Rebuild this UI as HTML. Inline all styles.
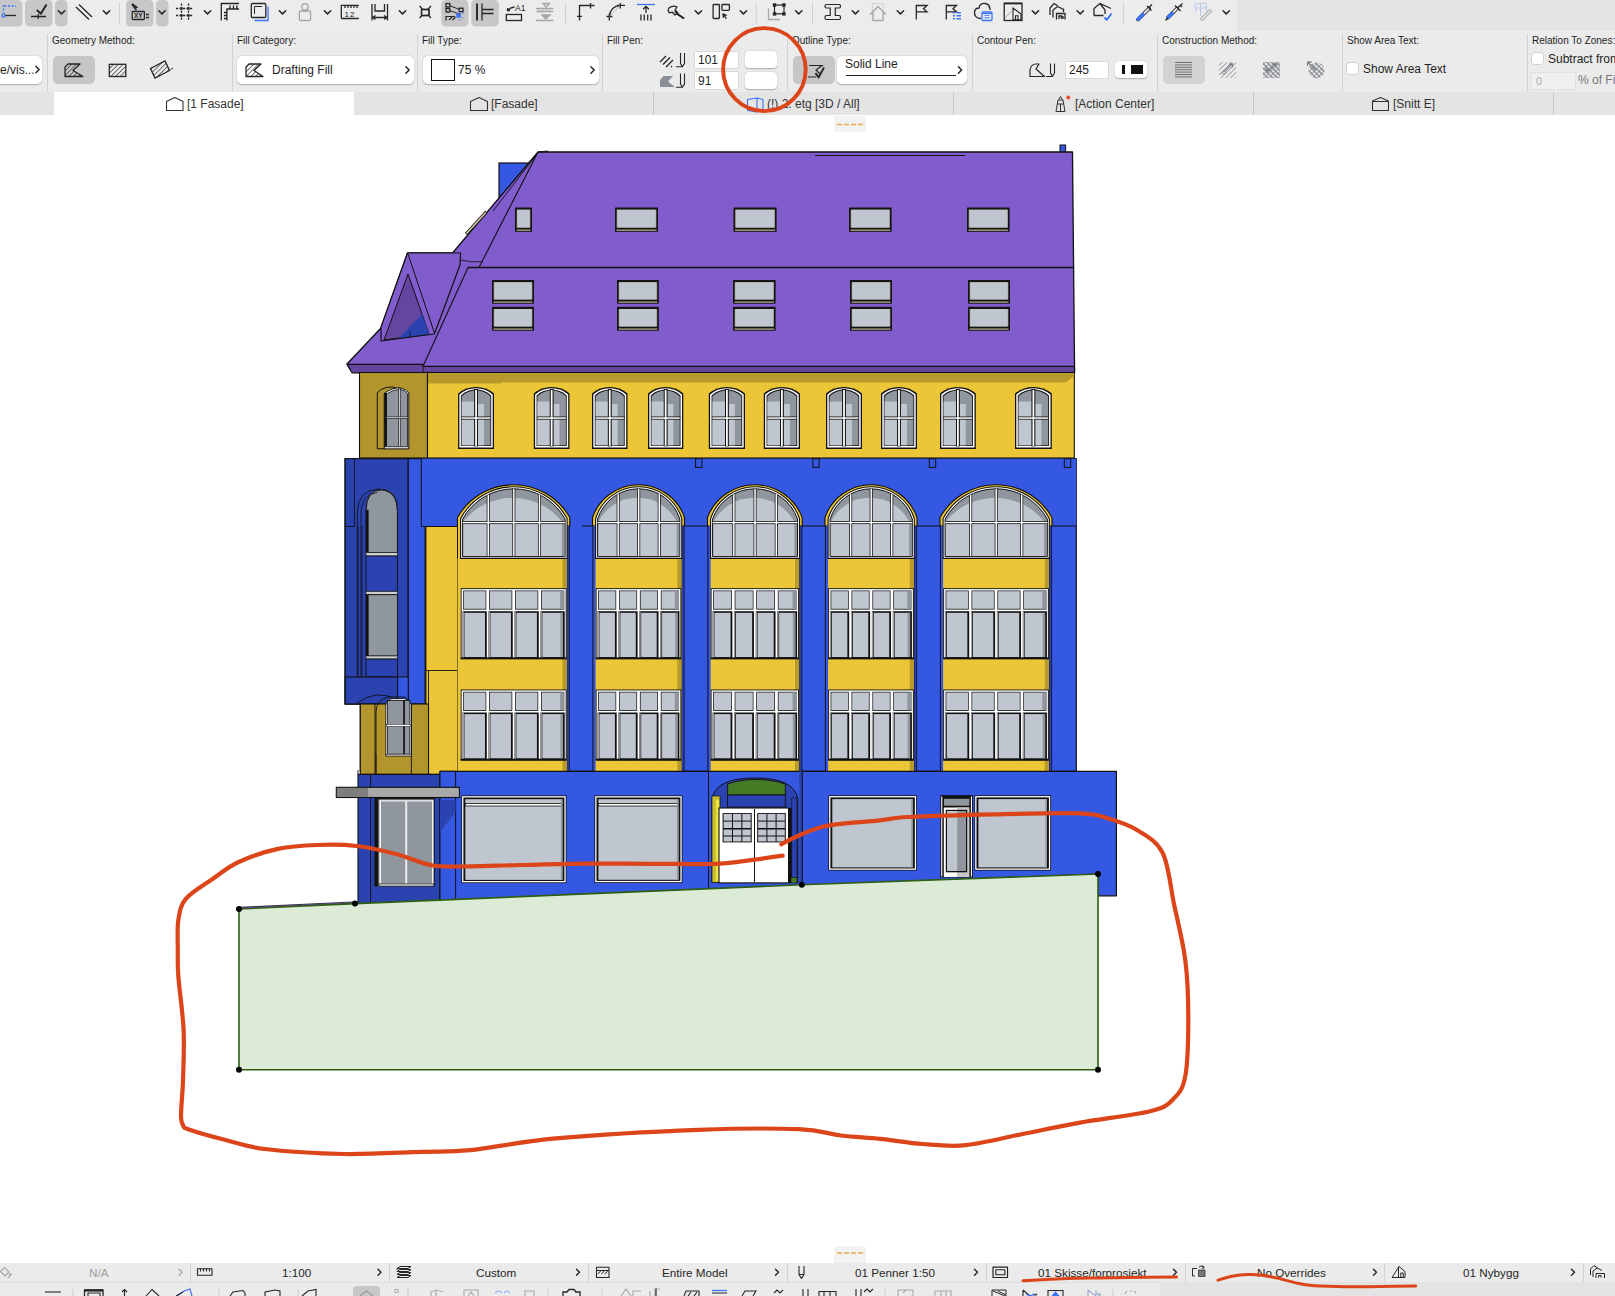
<!DOCTYPE html>
<html><head><meta charset="utf-8"><title>ArchiCAD</title>
<style>
html,body{margin:0;padding:0;background:#fff;}
body{width:1615px;height:1296px;overflow:hidden;font-family:"Liberation Sans",sans-serif;color:#222;}
#page{position:relative;width:1615px;height:1296px;overflow:hidden;background:#fff;}
#dw{position:absolute;left:0;top:0;}
#ov{position:absolute;left:0;top:0;pointer-events:none;}
.a{position:absolute;}
#tb{position:absolute;left:0;top:0;width:1615px;height:31px;background:#e4e4e4;}
#tbl{position:absolute;left:0;top:0;width:1237px;height:31px;background:#ececec;}
#ib{position:absolute;left:0;top:31px;width:1615px;height:61px;background:#ebebeb;}
#tabs{position:absolute;left:0;top:92px;width:1615px;height:23px;background:#e4e4e4;}
.sep{position:absolute;width:1px;background:#d2d2d2;}
.lbl{position:absolute;font-size:10px;color:#1e1e1e;white-space:nowrap;line-height:12px;}
.box{position:absolute;background:#fff;border-radius:5px;box-shadow:0 0.5px 1.5px rgba(0,0,0,0.28);}
.btn{position:absolute;background:#c6c6c8;border-radius:5px;}
.txt{position:absolute;font-size:12px;color:#1e1e1e;white-space:nowrap;line-height:14px;}
.inp{position:absolute;background:#fff;box-shadow:0 0 0 0.5px #c8c8c8;}
.tab{position:absolute;top:1px;height:23px;font-size:12px;color:#333;line-height:23px;white-space:nowrap;}
.tsep{position:absolute;top:0;width:1px;height:23px;background:#c4c4c4;}
#bb{position:absolute;left:0;top:1263px;width:1615px;height:19px;background:#ebebeb;}
#bt{position:absolute;left:0;top:1282px;width:1615px;height:14px;background:#e3e3e3;border-top:0 solid #d8d8d8;}
#btl{position:absolute;left:0;top:0;width:1160px;height:14px;background:#ebebeb;box-shadow:inset 0 1px 0 #dedede;}
.bsep{position:absolute;top:0;width:1px;height:19px;background:#d2d2d2;}
.btxt{position:absolute;font-size:11.7px;color:#262626;line-height:19px;top:0;white-space:nowrap;}
.chev{position:absolute;}
svg.i{position:absolute;overflow:visible;}

</style></head>
<body>
<div id="page">
<svg id="dw" width="1615" height="1296" viewBox="0 0 1615 1296">
<rect x="499" y="163" width="46" height="35" fill="#3558e2" stroke="#111" stroke-width="1.2" />
<rect x="1060" y="145" width="5.6" height="8" fill="#3558e2" stroke="#111" stroke-width="1" />
<polygon points="538,152 1072.5,152 1074.5,364 1074.5,372.5 359,372.5 350,369 347,364 381,328 407.5,253 452.5,253" fill="#805ccd" stroke="#111" stroke-width="1.3" stroke-linejoin="round" />
<polygon points="347,364.4 423,364.4 423.5,366.3 1074.5,366.3 1074.5,373 352,372.8" fill="#6446a0" stroke="#111" stroke-width="1.2" stroke-linejoin="round" />
<line x1="423.2" y1="364.4" x2="423.2" y2="373" stroke="#111" stroke-width="0.8"/>
<line x1="538" y1="152" x2="479" y2="267.5" stroke="#111" stroke-width="1.1"/>
<line x1="468" y1="267.5" x2="1074" y2="267.5" stroke="#111" stroke-width="1.3"/>
<line x1="468" y1="267.5" x2="423" y2="366.3" stroke="#111" stroke-width="1.1"/>
<line x1="815" y1="155.5" x2="965" y2="155.5" stroke="#111" stroke-width="1"/>
<line x1="548" y1="151" x2="538" y2="152" stroke="#111" stroke-width="1"/>
<polygon points="407.5,253 460.6,253 460,265 434.4,334 381,341 381,327" fill="#805ccd" stroke="#111" stroke-width="1.2" stroke-linejoin="round" />
<line x1="408" y1="253.8" x2="434.4" y2="333" stroke="#111" stroke-width="1"/>
<polygon points="408,274 429,334 384,340" fill="#6446a0" stroke="#111" stroke-width="1" stroke-linejoin="round" />
<polygon points="422,314 429,334 399,338" fill="#2b43b0" stroke="none" stroke-width="0" stroke-linejoin="round" />
<line x1="410" y1="331" x2="410" y2="337" stroke="#111" stroke-width="0.8"/>
<path d="M460.5,260 Q470,262.5 481.5,261.8" fill="none" stroke="#111" stroke-width="0.8"/>
<line x1="537" y1="154" x2="493" y2="211" stroke="#111" stroke-width="0.9"/>
<line x1="466" y1="234" x2="486.4" y2="211.8" stroke="#1a1a1a" stroke-width="3.2"/>
<line x1="466.5" y1="233.4" x2="485.8" y2="212.4" stroke="#d8ceb0" stroke-width="1.5"/>
<rect x="515" y="207.5" width="17" height="24.3" fill="#141410" stroke="none" stroke-width="1.0" />
<rect x="516.6" y="209.7" width="13.8" height="17.9" fill="#8a8470" stroke="none" stroke-width="1.0" />
<rect x="517.2" y="209.7" width="12.6" height="17.9" fill="#bfc6d0" stroke="none" stroke-width="1.0" />
<rect x="516.5" y="229.5" width="14.0" height="1.4" fill="#a89e84" stroke="none" stroke-width="1.0" />
<rect x="615" y="207.5" width="43" height="24.3" fill="#141410" stroke="none" stroke-width="1.0" />
<rect x="616.6" y="209.7" width="39.8" height="17.9" fill="#8a8470" stroke="none" stroke-width="1.0" />
<rect x="617.2" y="209.7" width="38.6" height="17.9" fill="#bfc6d0" stroke="none" stroke-width="1.0" />
<rect x="616.5" y="229.5" width="40.0" height="1.4" fill="#a89e84" stroke="none" stroke-width="1.0" />
<rect x="733.5" y="207.5" width="43.1" height="24.3" fill="#141410" stroke="none" stroke-width="1.0" />
<rect x="735.1" y="209.7" width="39.9" height="17.9" fill="#8a8470" stroke="none" stroke-width="1.0" />
<rect x="735.7" y="209.7" width="38.7" height="17.9" fill="#bfc6d0" stroke="none" stroke-width="1.0" />
<rect x="735.0" y="229.5" width="40.1" height="1.4" fill="#a89e84" stroke="none" stroke-width="1.0" />
<rect x="849" y="207.5" width="42.6" height="24.3" fill="#141410" stroke="none" stroke-width="1.0" />
<rect x="850.6" y="209.7" width="39.4" height="17.9" fill="#8a8470" stroke="none" stroke-width="1.0" />
<rect x="851.2" y="209.7" width="38.2" height="17.9" fill="#bfc6d0" stroke="none" stroke-width="1.0" />
<rect x="850.5" y="229.5" width="39.6" height="1.4" fill="#a89e84" stroke="none" stroke-width="1.0" />
<rect x="967" y="207.5" width="42.6" height="24.3" fill="#141410" stroke="none" stroke-width="1.0" />
<rect x="968.6" y="209.7" width="39.4" height="17.9" fill="#8a8470" stroke="none" stroke-width="1.0" />
<rect x="969.2" y="209.7" width="38.2" height="17.9" fill="#bfc6d0" stroke="none" stroke-width="1.0" />
<rect x="968.5" y="229.5" width="39.6" height="1.4" fill="#a89e84" stroke="none" stroke-width="1.0" />
<rect x="492" y="280" width="42" height="23.7" fill="#141410" stroke="none" stroke-width="1.0" />
<rect x="493.6" y="282.2" width="38.8" height="17.3" fill="#8a8470" stroke="none" stroke-width="1.0" />
<rect x="494.2" y="282.2" width="37.6" height="17.3" fill="#bfc6d0" stroke="none" stroke-width="1.0" />
<rect x="493.5" y="301.4" width="39.0" height="1.4" fill="#a89e84" stroke="none" stroke-width="1.0" />
<rect x="492" y="306.8" width="42" height="23.9" fill="#141410" stroke="none" stroke-width="1.0" />
<rect x="493.6" y="309.0" width="38.8" height="17.5" fill="#8a8470" stroke="none" stroke-width="1.0" />
<rect x="494.2" y="309.0" width="37.6" height="17.5" fill="#bfc6d0" stroke="none" stroke-width="1.0" />
<rect x="493.5" y="328.4" width="39.0" height="1.4" fill="#a89e84" stroke="none" stroke-width="1.0" />
<rect x="617" y="280" width="41.8" height="23.7" fill="#141410" stroke="none" stroke-width="1.0" />
<rect x="618.6" y="282.2" width="38.6" height="17.3" fill="#8a8470" stroke="none" stroke-width="1.0" />
<rect x="619.2" y="282.2" width="37.4" height="17.3" fill="#bfc6d0" stroke="none" stroke-width="1.0" />
<rect x="618.5" y="301.4" width="38.8" height="1.4" fill="#a89e84" stroke="none" stroke-width="1.0" />
<rect x="617" y="306.8" width="41.8" height="23.9" fill="#141410" stroke="none" stroke-width="1.0" />
<rect x="618.6" y="309.0" width="38.6" height="17.5" fill="#8a8470" stroke="none" stroke-width="1.0" />
<rect x="619.2" y="309.0" width="37.4" height="17.5" fill="#bfc6d0" stroke="none" stroke-width="1.0" />
<rect x="618.5" y="328.4" width="38.8" height="1.4" fill="#a89e84" stroke="none" stroke-width="1.0" />
<rect x="733" y="280" width="42.6" height="23.7" fill="#141410" stroke="none" stroke-width="1.0" />
<rect x="734.6" y="282.2" width="39.4" height="17.3" fill="#8a8470" stroke="none" stroke-width="1.0" />
<rect x="735.2" y="282.2" width="38.2" height="17.3" fill="#bfc6d0" stroke="none" stroke-width="1.0" />
<rect x="734.5" y="301.4" width="39.6" height="1.4" fill="#a89e84" stroke="none" stroke-width="1.0" />
<rect x="733" y="306.8" width="42.6" height="23.9" fill="#141410" stroke="none" stroke-width="1.0" />
<rect x="734.6" y="309.0" width="39.4" height="17.5" fill="#8a8470" stroke="none" stroke-width="1.0" />
<rect x="735.2" y="309.0" width="38.2" height="17.5" fill="#bfc6d0" stroke="none" stroke-width="1.0" />
<rect x="734.5" y="328.4" width="39.6" height="1.4" fill="#a89e84" stroke="none" stroke-width="1.0" />
<rect x="850" y="280" width="42" height="23.7" fill="#141410" stroke="none" stroke-width="1.0" />
<rect x="851.6" y="282.2" width="38.8" height="17.3" fill="#8a8470" stroke="none" stroke-width="1.0" />
<rect x="852.2" y="282.2" width="37.6" height="17.3" fill="#bfc6d0" stroke="none" stroke-width="1.0" />
<rect x="851.5" y="301.4" width="39.0" height="1.4" fill="#a89e84" stroke="none" stroke-width="1.0" />
<rect x="850" y="306.8" width="42" height="23.9" fill="#141410" stroke="none" stroke-width="1.0" />
<rect x="851.6" y="309.0" width="38.8" height="17.5" fill="#8a8470" stroke="none" stroke-width="1.0" />
<rect x="852.2" y="309.0" width="37.6" height="17.5" fill="#bfc6d0" stroke="none" stroke-width="1.0" />
<rect x="851.5" y="328.4" width="39.0" height="1.4" fill="#a89e84" stroke="none" stroke-width="1.0" />
<rect x="968" y="280" width="42" height="23.7" fill="#141410" stroke="none" stroke-width="1.0" />
<rect x="969.6" y="282.2" width="38.8" height="17.3" fill="#8a8470" stroke="none" stroke-width="1.0" />
<rect x="970.2" y="282.2" width="37.6" height="17.3" fill="#bfc6d0" stroke="none" stroke-width="1.0" />
<rect x="969.5" y="301.4" width="39.0" height="1.4" fill="#a89e84" stroke="none" stroke-width="1.0" />
<rect x="968" y="306.8" width="42" height="23.9" fill="#141410" stroke="none" stroke-width="1.0" />
<rect x="969.6" y="309.0" width="38.8" height="17.5" fill="#8a8470" stroke="none" stroke-width="1.0" />
<rect x="970.2" y="309.0" width="37.6" height="17.5" fill="#bfc6d0" stroke="none" stroke-width="1.0" />
<rect x="969.5" y="328.4" width="39.0" height="1.4" fill="#a89e84" stroke="none" stroke-width="1.0" />
<rect x="359.5" y="372.5" width="68.0" height="85.5" fill="#b3952d" stroke="#111" stroke-width="1.1" />
<rect x="427.5" y="372.5" width="646.8" height="85.5" fill="#ecc636" stroke="#111" stroke-width="1.1" />
<polygon points="428,373 1074,373 1074,376 1066,382.6 501,382.6 501,383.5 428,383.5" fill="#b89a2c" stroke="none" stroke-width="0" stroke-linejoin="round" />
<path d="M384.2,448.8 H377.3 V393 Q379,389.5 386,387.5 L393,387 L408.8,392.5" fill="none" stroke="#111" stroke-width="1"/>
<path d="M384.2,448.8 V393.5 Q392,387.5 400,387.8 Q406,389 408.8,392.8 V448.8 Z" fill="#fff" stroke="#111" stroke-width="1"/>
<path d="M386.5,447.5 V394 Q393,389.2 400,389.4 Q405.5,390.3 407.5,393.5 V447.5 Z" fill="#8f969e" stroke="#111" stroke-width="0.8"/>
<rect x="384.2" y="393" width="2.6" height="55" fill="#111" stroke="none" stroke-width="1.0" />
<rect x="398.3" y="388" width="2.2" height="60" fill="#111" stroke="none" stroke-width="1.0" />
<rect x="398.9" y="388.5" width="1.0" height="59.0" fill="#ddd" stroke="none" stroke-width="1.0" />
<rect x="386.5" y="416.6" width="21.0" height="2.2" fill="#111" stroke="none" stroke-width="1.0" />
<rect x="386.5" y="417.2" width="21.0" height="1.0" fill="#ddd" stroke="none" stroke-width="1.0" />
<rect x="384.5" y="446.5" width="24.3" height="2.3" fill="#ccc" stroke="#111" stroke-width="0.6" />
<path d="M458.1,448.9 V393.4 A28.372070312499964,28.372070312499964 0 0 1 494,393.4 V448.9 Z" fill="#111"/>
<path d="M459.40000000000003,447.59999999999997 V394.4 A25.77315573770485,25.77315573770485 0 0 1 492.7,394.4 V447.59999999999997 Z" fill="#fff"/>
<path d="M460.90000000000003,446.09999999999997 V395.4 A22.68642241379304,22.68642241379304 0 0 1 491.2,395.4 V446.09999999999997 Z" fill="#111"/>
<path d="M461.70000000000005,445.29999999999995 V396.2 A21.185937499999913,21.185937499999913 0 0 1 490.4,396.2 V445.29999999999995 Z" fill="#8f969e"/>
<rect x="461.70000000000005" y="401.5" width="12.55" height="43.8" fill="#bfc6d0" stroke="none" stroke-width="1.0" />
<rect x="477.85" y="404" width="6.1" height="41.3" fill="#bfc6d0" stroke="none" stroke-width="1.0" />
<rect x="474.15000000000003" y="389" width="3.8" height="57.4" fill="#111" stroke="none" stroke-width="1.0" />
<rect x="475.15000000000003" y="390" width="1.8" height="55.9" fill="#fff" stroke="none" stroke-width="1.0" />
<rect x="461.20000000000005" y="416.5" width="29.7" height="3.1" fill="#111" stroke="none" stroke-width="1.0" />
<rect x="461.70000000000005" y="417.3" width="28.7" height="1.5" fill="#fff" stroke="none" stroke-width="1.0" />
<rect x="475.15000000000003" y="416.5" width="1.8" height="3.1" fill="#fff" stroke="none" stroke-width="1.0" />
<path d="M533.8,448.9 V393.4 A28.09238281250006,28.09238281250006 0 0 1 569.5,393.4 V448.9 Z" fill="#111"/>
<path d="M535.0999999999999,447.59999999999997 V394.4 A25.501024590164114,25.501024590164114 0 0 1 568.2,394.4 V447.59999999999997 Z" fill="#fff"/>
<path d="M536.5999999999999,446.09999999999997 V395.4 A22.426077586207068,22.426077586207068 0 0 1 566.7,395.4 V446.09999999999997 Z" fill="#111"/>
<path d="M537.4,445.29999999999995 V396.2 A20.930580357142855,20.930580357142855 0 0 1 565.9,396.2 V445.29999999999995 Z" fill="#8f969e"/>
<rect x="537.4" y="401.5" width="12.45" height="43.8" fill="#bfc6d0" stroke="none" stroke-width="1.0" />
<rect x="553.4499999999999" y="404" width="6.05" height="41.3" fill="#bfc6d0" stroke="none" stroke-width="1.0" />
<rect x="549.75" y="389" width="3.8" height="57.4" fill="#111" stroke="none" stroke-width="1.0" />
<rect x="550.75" y="390" width="1.8" height="55.9" fill="#fff" stroke="none" stroke-width="1.0" />
<rect x="536.9" y="416.5" width="29.5" height="3.1" fill="#111" stroke="none" stroke-width="1.0" />
<rect x="537.4" y="417.3" width="28.5" height="1.5" fill="#fff" stroke="none" stroke-width="1.0" />
<rect x="550.75" y="416.5" width="1.8" height="3.1" fill="#fff" stroke="none" stroke-width="1.0" />
<path d="M592,448.9 V393.4 A27.814257812500003,27.814257812500003 0 0 1 627.5,393.4 V448.9 Z" fill="#111"/>
<path d="M593.3,447.59999999999997 V394.4 A25.230532786885366,25.230532786885366 0 0 1 626.2,394.4 V447.59999999999997 Z" fill="#fff"/>
<path d="M594.8,446.09999999999997 V395.4 A22.167456896551837,22.167456896551837 0 0 1 624.7,395.4 V446.09999999999997 Z" fill="#111"/>
<path d="M595.6,445.29999999999995 V396.2 A20.677008928571368,20.677008928571368 0 0 1 623.9,396.2 V445.29999999999995 Z" fill="#8f969e"/>
<rect x="595.6" y="401.5" width="12.35" height="43.8" fill="#bfc6d0" stroke="none" stroke-width="1.0" />
<rect x="611.55" y="404" width="6.01" height="41.3" fill="#bfc6d0" stroke="none" stroke-width="1.0" />
<rect x="607.85" y="389" width="3.8" height="57.4" fill="#111" stroke="none" stroke-width="1.0" />
<rect x="608.85" y="390" width="1.8" height="55.9" fill="#fff" stroke="none" stroke-width="1.0" />
<rect x="595.1" y="416.5" width="29.3" height="3.1" fill="#111" stroke="none" stroke-width="1.0" />
<rect x="595.6" y="417.3" width="28.3" height="1.5" fill="#fff" stroke="none" stroke-width="1.0" />
<rect x="608.85" y="416.5" width="1.8" height="3.1" fill="#fff" stroke="none" stroke-width="1.0" />
<path d="M648,448.9 V393.4 A27.537695312499935,27.537695312499935 0 0 1 683.3,393.4 V448.9 Z" fill="#111"/>
<path d="M649.3,447.59999999999997 V394.4 A24.96168032786891,24.96168032786891 0 0 1 682.0,394.4 V447.59999999999997 Z" fill="#fff"/>
<path d="M650.8,446.09999999999997 V395.4 A21.91056034482764,21.91056034482764 0 0 1 680.5,395.4 V446.09999999999997 Z" fill="#111"/>
<path d="M651.6,445.29999999999995 V396.2 A20.425223214285598,20.425223214285598 0 0 1 679.6999999999999,396.2 V445.29999999999995 Z" fill="#8f969e"/>
<rect x="651.6" y="401.5" width="12.25" height="43.8" fill="#bfc6d0" stroke="none" stroke-width="1.0" />
<rect x="667.4499999999999" y="404" width="5.97" height="41.3" fill="#bfc6d0" stroke="none" stroke-width="1.0" />
<rect x="663.75" y="389" width="3.8" height="57.4" fill="#111" stroke="none" stroke-width="1.0" />
<rect x="664.75" y="390" width="1.8" height="55.9" fill="#fff" stroke="none" stroke-width="1.0" />
<rect x="651.1" y="416.5" width="29.1" height="3.1" fill="#111" stroke="none" stroke-width="1.0" />
<rect x="651.6" y="417.3" width="28.1" height="1.5" fill="#fff" stroke="none" stroke-width="1.0" />
<rect x="664.75" y="416.5" width="1.8" height="3.1" fill="#fff" stroke="none" stroke-width="1.0" />
<path d="M708.8,448.9 V393.4 A28.794531250000066,28.794531250000066 0 0 1 745,393.4 V448.9 Z" fill="#111"/>
<path d="M710.0999999999999,447.59999999999997 V394.4 A26.184426229508386,26.184426229508386 0 0 1 743.7,394.4 V447.59999999999997 Z" fill="#fff"/>
<path d="M711.5999999999999,446.09999999999997 V395.4 A23.080172413793278,23.080172413793278 0 0 1 742.2,395.4 V446.09999999999997 Z" fill="#111"/>
<path d="M712.4,445.29999999999995 V396.2 A21.572321428571428,21.572321428571428 0 0 1 741.4,396.2 V445.29999999999995 Z" fill="#8f969e"/>
<rect x="712.4" y="401.5" width="12.7" height="43.8" fill="#bfc6d0" stroke="none" stroke-width="1.0" />
<rect x="728.6999999999999" y="404" width="6.16" height="41.3" fill="#bfc6d0" stroke="none" stroke-width="1.0" />
<rect x="725.0" y="389" width="3.8" height="57.4" fill="#111" stroke="none" stroke-width="1.0" />
<rect x="726.0" y="390" width="1.8" height="55.9" fill="#fff" stroke="none" stroke-width="1.0" />
<rect x="711.9" y="416.5" width="30.0" height="3.1" fill="#111" stroke="none" stroke-width="1.0" />
<rect x="712.4" y="417.3" width="29.0" height="1.5" fill="#fff" stroke="none" stroke-width="1.0" />
<rect x="726.0" y="416.5" width="1.8" height="3.1" fill="#fff" stroke="none" stroke-width="1.0" />
<path d="M763.8,448.9 V393.4 A28.794531250000066,28.794531250000066 0 0 1 800,393.4 V448.9 Z" fill="#111"/>
<path d="M765.0999999999999,447.59999999999997 V394.4 A26.184426229508386,26.184426229508386 0 0 1 798.7,394.4 V447.59999999999997 Z" fill="#fff"/>
<path d="M766.5999999999999,446.09999999999997 V395.4 A23.080172413793278,23.080172413793278 0 0 1 797.2,395.4 V446.09999999999997 Z" fill="#111"/>
<path d="M767.4,445.29999999999995 V396.2 A21.572321428571428,21.572321428571428 0 0 1 796.4,396.2 V445.29999999999995 Z" fill="#8f969e"/>
<rect x="767.4" y="401.5" width="12.7" height="43.8" fill="#bfc6d0" stroke="none" stroke-width="1.0" />
<rect x="783.6999999999999" y="404" width="6.16" height="41.3" fill="#bfc6d0" stroke="none" stroke-width="1.0" />
<rect x="780.0" y="389" width="3.8" height="57.4" fill="#111" stroke="none" stroke-width="1.0" />
<rect x="781.0" y="390" width="1.8" height="55.9" fill="#fff" stroke="none" stroke-width="1.0" />
<rect x="766.9" y="416.5" width="30.0" height="3.1" fill="#111" stroke="none" stroke-width="1.0" />
<rect x="767.4" y="417.3" width="29.0" height="1.5" fill="#fff" stroke="none" stroke-width="1.0" />
<rect x="781.0" y="416.5" width="1.8" height="3.1" fill="#fff" stroke="none" stroke-width="1.0" />
<path d="M826,448.9 V393.4 A28.512500000000003,28.512500000000003 0 0 1 862,393.4 V448.9 Z" fill="#111"/>
<path d="M827.3,447.59999999999997 V394.4 A25.90983606557389,25.90983606557389 0 0 1 860.7,394.4 V447.59999999999997 Z" fill="#fff"/>
<path d="M828.8,446.09999999999997 V395.4 A22.81724137931046,22.81724137931046 0 0 1 859.2,395.4 V446.09999999999997 Z" fill="#111"/>
<path d="M829.6,445.29999999999995 V396.2 A21.314285714285653,21.314285714285653 0 0 1 858.4,396.2 V445.29999999999995 Z" fill="#8f969e"/>
<rect x="829.6" y="401.5" width="12.6" height="43.8" fill="#bfc6d0" stroke="none" stroke-width="1.0" />
<rect x="845.8" y="404" width="6.12" height="41.3" fill="#bfc6d0" stroke="none" stroke-width="1.0" />
<rect x="842.1" y="389" width="3.8" height="57.4" fill="#111" stroke="none" stroke-width="1.0" />
<rect x="843.1" y="390" width="1.8" height="55.9" fill="#fff" stroke="none" stroke-width="1.0" />
<rect x="829.1" y="416.5" width="29.8" height="3.1" fill="#111" stroke="none" stroke-width="1.0" />
<rect x="829.6" y="417.3" width="28.8" height="1.5" fill="#fff" stroke="none" stroke-width="1.0" />
<rect x="843.1" y="416.5" width="1.8" height="3.1" fill="#fff" stroke="none" stroke-width="1.0" />
<path d="M881,448.9 V393.4 A28.512500000000003,28.512500000000003 0 0 1 917,393.4 V448.9 Z" fill="#111"/>
<path d="M882.3,447.59999999999997 V394.4 A25.90983606557389,25.90983606557389 0 0 1 915.7,394.4 V447.59999999999997 Z" fill="#fff"/>
<path d="M883.8,446.09999999999997 V395.4 A22.81724137931046,22.81724137931046 0 0 1 914.2,395.4 V446.09999999999997 Z" fill="#111"/>
<path d="M884.6,445.29999999999995 V396.2 A21.314285714285653,21.314285714285653 0 0 1 913.4,396.2 V445.29999999999995 Z" fill="#8f969e"/>
<rect x="884.6" y="401.5" width="12.6" height="43.8" fill="#bfc6d0" stroke="none" stroke-width="1.0" />
<rect x="900.8" y="404" width="6.12" height="41.3" fill="#bfc6d0" stroke="none" stroke-width="1.0" />
<rect x="897.1" y="389" width="3.8" height="57.4" fill="#111" stroke="none" stroke-width="1.0" />
<rect x="898.1" y="390" width="1.8" height="55.9" fill="#fff" stroke="none" stroke-width="1.0" />
<rect x="884.1" y="416.5" width="29.8" height="3.1" fill="#111" stroke="none" stroke-width="1.0" />
<rect x="884.6" y="417.3" width="28.8" height="1.5" fill="#fff" stroke="none" stroke-width="1.0" />
<rect x="898.1" y="416.5" width="1.8" height="3.1" fill="#fff" stroke="none" stroke-width="1.0" />
<path d="M940,448.9 V393.4 A28.232031249999938,28.232031249999938 0 0 1 975.8,393.4 V448.9 Z" fill="#111"/>
<path d="M941.3,447.59999999999997 V394.4 A25.636885245901702,25.636885245901702 0 0 1 974.5,394.4 V447.59999999999997 Z" fill="#fff"/>
<path d="M942.8,446.09999999999997 V395.4 A22.556034482758676,22.556034482758676 0 0 1 973.0,395.4 V446.09999999999997 Z" fill="#111"/>
<path d="M943.6,445.29999999999995 V396.2 A21.058035714285598,21.058035714285598 0 0 1 972.1999999999999,396.2 V445.29999999999995 Z" fill="#8f969e"/>
<rect x="943.6" y="401.5" width="12.5" height="43.8" fill="#bfc6d0" stroke="none" stroke-width="1.0" />
<rect x="959.6999999999999" y="404" width="6.08" height="41.3" fill="#bfc6d0" stroke="none" stroke-width="1.0" />
<rect x="956.0" y="389" width="3.8" height="57.4" fill="#111" stroke="none" stroke-width="1.0" />
<rect x="957.0" y="390" width="1.8" height="55.9" fill="#fff" stroke="none" stroke-width="1.0" />
<rect x="943.1" y="416.5" width="29.6" height="3.1" fill="#111" stroke="none" stroke-width="1.0" />
<rect x="943.6" y="417.3" width="28.6" height="1.5" fill="#fff" stroke="none" stroke-width="1.0" />
<rect x="957.0" y="416.5" width="1.8" height="3.1" fill="#fff" stroke="none" stroke-width="1.0" />
<path d="M1015,448.9 V393.4 A29.649999999999935,29.649999999999935 0 0 1 1051.8,393.4 V448.9 Z" fill="#111"/>
<path d="M1016.3,447.59999999999997 V394.4 A27.01803278688531,27.01803278688531 0 0 1 1050.5,394.4 V447.59999999999997 Z" fill="#fff"/>
<path d="M1017.8,446.09999999999997 V395.4 A23.87931034482764,23.87931034482764 0 0 1 1049.0,395.4 V446.09999999999997 Z" fill="#111"/>
<path d="M1018.6,445.29999999999995 V396.2 A22.357142857142886,22.357142857142886 0 0 1 1048.2,396.2 V445.29999999999995 Z" fill="#8f969e"/>
<rect x="1018.6" y="401.5" width="13.0" height="43.8" fill="#bfc6d0" stroke="none" stroke-width="1.0" />
<rect x="1035.2" y="404" width="6.3" height="41.3" fill="#bfc6d0" stroke="none" stroke-width="1.0" />
<rect x="1031.5" y="389" width="3.8" height="57.4" fill="#111" stroke="none" stroke-width="1.0" />
<rect x="1032.5" y="390" width="1.8" height="55.9" fill="#fff" stroke="none" stroke-width="1.0" />
<rect x="1018.1" y="416.5" width="30.6" height="3.1" fill="#111" stroke="none" stroke-width="1.0" />
<rect x="1018.6" y="417.3" width="29.6" height="1.5" fill="#fff" stroke="none" stroke-width="1.0" />
<rect x="1032.5" y="416.5" width="1.8" height="3.1" fill="#fff" stroke="none" stroke-width="1.0" />
<polygon points="345,458.5 1076.3,458.5 1076.3,771.3 360.3,771.3 360.3,704 345,704" fill="#3558e2" stroke="#111" stroke-width="1.2" stroke-linejoin="round" />
<rect x="345.2" y="458.7" width="63.0" height="245.3" fill="#2b43b0" stroke="#111" stroke-width="1.1" />
<rect x="408.2" y="458.7" width="17.0" height="245.3" fill="#3558e2" stroke="#111" stroke-width="1.1" />
<line x1="354.4" y1="458.7" x2="354.4" y2="526.5" stroke="#111" stroke-width="0.9"/>
<line x1="345.2" y1="526.5" x2="354.4" y2="526.5" stroke="#111" stroke-width="0.9"/>
<line x1="358" y1="526" x2="358" y2="677" stroke="#111" stroke-width="0.8"/>
<line x1="362" y1="526" x2="362" y2="677" stroke="#111" stroke-width="0.8"/>
<path d="M366,552.7 V511.4 Q366,489.8 381.7,489.8 Q397.4,489.8 397.4,511.4 V552.7 Z" fill="#8f969e" stroke="#111" stroke-width="1"/>
<rect x="366" y="509.8" width="2.6" height="42.9" fill="#111" stroke="none" stroke-width="1.0" />
<rect x="366" y="552.7" width="31.4" height="3.3" fill="#d0d0d0" stroke="#111" stroke-width="0.6" />
<rect x="366" y="556" width="31.4" height="35.4" fill="#2b43b0" stroke="#111" stroke-width="0.9" />
<rect x="366" y="591.4" width="31.4" height="3.3" fill="#d0d0d0" stroke="#111" stroke-width="0.6" />
<rect x="366" y="594.7" width="31.4" height="61.3" fill="#8f969e" stroke="#111" stroke-width="0.9" />
<rect x="366" y="594.7" width="2.6" height="61.3" fill="#111" stroke="none" stroke-width="1.0" />
<rect x="366" y="656" width="31.4" height="3" fill="#d0d0d0" stroke="#111" stroke-width="0.6" />
<rect x="366" y="659" width="31.4" height="18" fill="#2b43b0" stroke="#111" stroke-width="0.9" />
<rect x="345.2" y="677" width="52.5" height="27" fill="#2b43b0" stroke="#111" stroke-width="1.1" />
<rect x="397.7" y="677" width="10.5" height="27" fill="#3558e2" stroke="#111" stroke-width="1" />
<path d="M356,704 Q376,688 397.7,700" fill="none" stroke="#111" stroke-width="0.9"/>
<rect x="421.3" y="458.7" width="655.0" height="67.8" fill="#3558e2" stroke="none" stroke-width="1.0" />
<rect x="695.5999999999999" y="458.7" width="6.4" height="8.7" fill="#3558e2" stroke="#111" stroke-width="1" />
<rect x="812.8" y="458.7" width="6.4" height="8.7" fill="#3558e2" stroke="#111" stroke-width="1" />
<rect x="929.3" y="458.7" width="6.4" height="8.7" fill="#3558e2" stroke="#111" stroke-width="1" />
<rect x="1064.3" y="458.7" width="6.4" height="8.7" fill="#3558e2" stroke="#111" stroke-width="1" />
<line x1="421.3" y1="526.5" x2="457" y2="526.5" stroke="#111" stroke-width="1"/>
<line x1="421.3" y1="458.7" x2="421.3" y2="526.5" stroke="#111" stroke-width="1"/>
<line x1="425.4" y1="526.5" x2="425.4" y2="704" stroke="#111" stroke-width="1"/>
<path d="M357.3,677 V512 Q358,491 377,489 Q394,489 397.4,505" fill="none" stroke="#111" stroke-width="0.9"/>
<path d="M361,677 V512 Q362,494 377,492.5" fill="none" stroke="#111" stroke-width="0.8"/>
<rect x="425.9" y="526.5" width="31.6" height="247.9" fill="#ecc636" stroke="#111" stroke-width="1" />
<line x1="425.9" y1="670.5" x2="457.3" y2="670.5" stroke="#111" stroke-width="0.9"/>
<line x1="428.5" y1="670.5" x2="428.5" y2="774.4" stroke="#111" stroke-width="0.9"/>
<rect x="360.3" y="704" width="68.2" height="70.4" fill="#b3952d" stroke="#111" stroke-width="1.1" />
<line x1="375" y1="704" x2="375" y2="774" stroke="#111" stroke-width="0.9"/>
<line x1="376" y1="754" x2="376" y2="774" stroke="#111" stroke-width="0.7"/>
<path d="M376,774 V712 Q376,700 388,697 L405,697 L411.4,704" fill="none" stroke="#111" stroke-width="0.9"/>
<path d="M385.8,755.8 V706 Q385.8,699.5 392,698.7 L405,698.7 L411.4,704 V755.8 Z" fill="#fff" stroke="#111" stroke-width="0.9"/>
<rect x="387.5" y="700.5" width="22.3" height="53.7" fill="#8f969e" stroke="#111" stroke-width="0.8" />
<rect x="403.2" y="700" width="1.7" height="55" fill="#111" stroke="none" stroke-width="1.0" />
<rect x="386.5" y="724.6" width="24.0" height="1.6" fill="#fff" stroke="#111" stroke-width="0.4" />
<rect x="386" y="754.2" width="25.4" height="1.8" fill="#d8d8d8" stroke="#111" stroke-width="0.5" />
<line x1="411.4" y1="704" x2="411.4" y2="774" stroke="#111" stroke-width="0.9"/>
<path d="M457.5,526.0 V517.5 A64.5582951070336,64.5582951070336 0 0 1 569.8,517.5 V526.0 Z" fill="#ecc636" stroke="#111" stroke-width="1.1"/>
<rect x="457.5" y="517.5" width="3.3" height="253.8" fill="#ecc636" stroke="none" stroke-width="1.0" />
<line x1="457.5" y1="517.5" x2="457.5" y2="771.3" stroke="#111" stroke-width="1"/>
<rect x="566.6999999999999" y="526.0" width="3.1" height="245.3" fill="#2b43b0" stroke="none" stroke-width="1.0" />
<line x1="566.6999999999999" y1="525.5" x2="566.6999999999999" y2="771.3" stroke="#111" stroke-width="1"/>
<line x1="569.4" y1="525.5" x2="569.4" y2="771.3" stroke="#111" stroke-width="0.8"/>
<rect x="457.5" y="558.4" width="109.2" height="212.9" fill="#ecc636" stroke="none" stroke-width="1.0" />
<rect x="562.5999999999999" y="558.4" width="4.1" height="212.9" fill="#b89a2c" stroke="none" stroke-width="1.0" />
<path d="M460.6,558.4 V518.5 A60.57496056782326,60.57496056782326 0 0 1 567.0999999999999,518.5 V558.4 Z" fill="#fff" stroke="#111" stroke-width="1.1"/>
<path d="M462.6,556.6 V519.0 A58.586134105960184,58.586134105960184 0 0 1 565.0999999999999,519.0 V556.6 Z" fill="#8f969e" stroke="#111" stroke-width="1"/>
<path d="M463.40000000000003,556 V521.5 A63.02220464135006,63.02220464135006 0 0 1 561.8999999999999,521.5 V556 Z" fill="#bfc6d0"/>
<clipPath id="cg0"><path d="M462.6,556.6 V519.0 A58.586134105960184,58.586134105960184 0 0 1 565.0999999999999,519.0 V556.6 Z"/></clipPath><g clip-path="url(#cg0)">
<rect x="486.725" y="486.8" width="3.0" height="69.8" fill="#111" stroke="none" stroke-width="1.0" />
<rect x="487.475" y="486.8" width="1.5" height="69.5" fill="#fff" stroke="none" stroke-width="1.0" />
<rect x="512.3499999999999" y="486.8" width="3.0" height="69.8" fill="#111" stroke="none" stroke-width="1.0" />
<rect x="513.0999999999999" y="486.8" width="1.5" height="69.5" fill="#fff" stroke="none" stroke-width="1.0" />
<rect x="537.9749999999999" y="486.8" width="3.0" height="69.8" fill="#111" stroke="none" stroke-width="1.0" />
<rect x="538.7249999999999" y="486.8" width="1.5" height="69.5" fill="#fff" stroke="none" stroke-width="1.0" />
</g>
<rect x="462.6" y="521.1" width="102.5" height="3.0" fill="#111" stroke="none" stroke-width="1.0" />
<rect x="462.6" y="521.9" width="102.5" height="1.4" fill="#fff" stroke="none" stroke-width="1.0" />
<rect x="487.475" y="521.1" width="1.5" height="3.0" fill="#fff" stroke="none" stroke-width="1.0" />
<rect x="513.0999999999999" y="521.1" width="1.5" height="3.0" fill="#fff" stroke="none" stroke-width="1.0" />
<rect x="538.7249999999999" y="521.1" width="1.5" height="3.0" fill="#fff" stroke="none" stroke-width="1.0" />
<rect x="562.8999999999999" y="524.1" width="1.7" height="32.2" fill="#8f969e" stroke="none" stroke-width="1.0" />
<rect x="460.7" y="588.2" width="105.9" height="71.0" fill="#111" stroke="none" stroke-width="1.0" />
<rect x="461.59999999999997" y="589.1" width="104.1" height="69.2" fill="#fff" stroke="none" stroke-width="1.0" />
<rect x="463.09999999999997" y="590.5" width="23.18" height="19.1" fill="#111" stroke="none" stroke-width="1.0" />
<rect x="463.8" y="591.2" width="21.77" height="17.6" fill="#bfc6d0" stroke="none" stroke-width="1.0" />
<rect x="462.59999999999997" y="611.2" width="24.18" height="47.7" fill="#111" stroke="none" stroke-width="1.0" />
<rect x="464.4" y="612.8000000000001" width="20.57" height="44.3" fill="#bfc6d0" stroke="none" stroke-width="1.0" />
<rect x="463.0" y="611.8000000000001" width="0.6" height="46.4" fill="#fff" stroke="none" stroke-width="1.0" />
<rect x="489.07499999999993" y="590.5" width="23.18" height="19.1" fill="#111" stroke="none" stroke-width="1.0" />
<rect x="489.775" y="591.2" width="21.77" height="17.6" fill="#bfc6d0" stroke="none" stroke-width="1.0" />
<rect x="488.57499999999993" y="611.2" width="24.18" height="47.7" fill="#111" stroke="none" stroke-width="1.0" />
<rect x="490.37499999999994" y="612.8000000000001" width="20.58" height="44.3" fill="#bfc6d0" stroke="none" stroke-width="1.0" />
<rect x="488.97499999999997" y="611.8000000000001" width="0.6" height="46.4" fill="#fff" stroke="none" stroke-width="1.0" />
<rect x="515.05" y="590.5" width="23.18" height="19.1" fill="#111" stroke="none" stroke-width="1.0" />
<rect x="515.75" y="591.2" width="21.77" height="17.6" fill="#bfc6d0" stroke="none" stroke-width="1.0" />
<rect x="514.55" y="611.2" width="24.18" height="47.7" fill="#111" stroke="none" stroke-width="1.0" />
<rect x="516.35" y="612.8000000000001" width="20.57" height="44.3" fill="#bfc6d0" stroke="none" stroke-width="1.0" />
<rect x="514.9499999999999" y="611.8000000000001" width="0.6" height="46.4" fill="#fff" stroke="none" stroke-width="1.0" />
<rect x="541.0249999999999" y="590.5" width="23.18" height="19.1" fill="#111" stroke="none" stroke-width="1.0" />
<rect x="541.7249999999999" y="591.2" width="21.77" height="17.6" fill="#bfc6d0" stroke="none" stroke-width="1.0" />
<rect x="540.5249999999999" y="611.2" width="24.18" height="47.7" fill="#111" stroke="none" stroke-width="1.0" />
<rect x="542.3249999999999" y="612.8000000000001" width="20.57" height="44.3" fill="#bfc6d0" stroke="none" stroke-width="1.0" />
<rect x="540.9249999999998" y="611.8000000000001" width="0.6" height="46.4" fill="#fff" stroke="none" stroke-width="1.0" />
<rect x="560.0999999999999" y="591.2" width="4.3" height="17.6" fill="#8f969e" stroke="none" stroke-width="1.0" />
<rect x="560.3999999999999" y="612.8000000000001" width="2.5" height="44.3" fill="#8f969e" stroke="none" stroke-width="1.0" />
<rect x="460.7" y="657.4000000000001" width="105.9" height="1.8" fill="#111" stroke="none" stroke-width="1.0" />
<rect x="460.7" y="689.5" width="105.9" height="71.0" fill="#111" stroke="none" stroke-width="1.0" />
<rect x="461.59999999999997" y="690.4" width="104.1" height="69.2" fill="#fff" stroke="none" stroke-width="1.0" />
<rect x="463.09999999999997" y="691.8" width="23.18" height="19.1" fill="#111" stroke="none" stroke-width="1.0" />
<rect x="463.8" y="692.5" width="21.77" height="17.6" fill="#bfc6d0" stroke="none" stroke-width="1.0" />
<rect x="462.59999999999997" y="712.5" width="24.18" height="47.7" fill="#111" stroke="none" stroke-width="1.0" />
<rect x="464.4" y="714.1" width="20.57" height="44.3" fill="#bfc6d0" stroke="none" stroke-width="1.0" />
<rect x="463.0" y="713.1" width="0.6" height="46.4" fill="#fff" stroke="none" stroke-width="1.0" />
<rect x="489.07499999999993" y="691.8" width="23.18" height="19.1" fill="#111" stroke="none" stroke-width="1.0" />
<rect x="489.775" y="692.5" width="21.77" height="17.6" fill="#bfc6d0" stroke="none" stroke-width="1.0" />
<rect x="488.57499999999993" y="712.5" width="24.18" height="47.7" fill="#111" stroke="none" stroke-width="1.0" />
<rect x="490.37499999999994" y="714.1" width="20.58" height="44.3" fill="#bfc6d0" stroke="none" stroke-width="1.0" />
<rect x="488.97499999999997" y="713.1" width="0.6" height="46.4" fill="#fff" stroke="none" stroke-width="1.0" />
<rect x="515.05" y="691.8" width="23.18" height="19.1" fill="#111" stroke="none" stroke-width="1.0" />
<rect x="515.75" y="692.5" width="21.77" height="17.6" fill="#bfc6d0" stroke="none" stroke-width="1.0" />
<rect x="514.55" y="712.5" width="24.18" height="47.7" fill="#111" stroke="none" stroke-width="1.0" />
<rect x="516.35" y="714.1" width="20.57" height="44.3" fill="#bfc6d0" stroke="none" stroke-width="1.0" />
<rect x="514.9499999999999" y="713.1" width="0.6" height="46.4" fill="#fff" stroke="none" stroke-width="1.0" />
<rect x="541.0249999999999" y="691.8" width="23.18" height="19.1" fill="#111" stroke="none" stroke-width="1.0" />
<rect x="541.7249999999999" y="692.5" width="21.77" height="17.6" fill="#bfc6d0" stroke="none" stroke-width="1.0" />
<rect x="540.5249999999999" y="712.5" width="24.18" height="47.7" fill="#111" stroke="none" stroke-width="1.0" />
<rect x="542.3249999999999" y="714.1" width="20.57" height="44.3" fill="#bfc6d0" stroke="none" stroke-width="1.0" />
<rect x="540.9249999999998" y="713.1" width="0.6" height="46.4" fill="#fff" stroke="none" stroke-width="1.0" />
<rect x="560.0999999999999" y="692.5" width="4.3" height="17.6" fill="#8f969e" stroke="none" stroke-width="1.0" />
<rect x="560.3999999999999" y="714.1" width="2.5" height="44.3" fill="#8f969e" stroke="none" stroke-width="1.0" />
<rect x="460.7" y="758.7" width="105.9" height="1.8" fill="#111" stroke="none" stroke-width="1.0" />
<path d="M592.5,526.0 V517.5 A48.70474006116208,48.70474006116208 0 0 1 684.5,517.5 V526.0 Z" fill="#ecc636" stroke="#111" stroke-width="1.1"/>
<rect x="592.5" y="526.0" width="3.1" height="245.3" fill="#3558e2" stroke="none" stroke-width="1.0" />
<line x1="592.9" y1="525.5" x2="592.9" y2="771.3" stroke="#111" stroke-width="1"/>
<rect x="681.4" y="526.0" width="3.1" height="245.3" fill="#2b43b0" stroke="none" stroke-width="1.0" />
<line x1="681.4" y1="525.5" x2="681.4" y2="771.3" stroke="#111" stroke-width="1"/>
<line x1="684.1" y1="525.5" x2="684.1" y2="771.3" stroke="#111" stroke-width="0.8"/>
<rect x="595.6" y="558.4" width="85.8" height="212.9" fill="#ecc636" stroke="none" stroke-width="1.0" />
<rect x="677.3" y="558.4" width="4.1" height="212.9" fill="#b89a2c" stroke="none" stroke-width="1.0" />
<path d="M595.6,558.4 V518.5 A45.14984227129334,45.14984227129334 0 0 1 681.8,518.5 V558.4 Z" fill="#fff" stroke="#111" stroke-width="1.1"/>
<path d="M597.6,556.6 V519.0 A43.06705298013241,43.06705298013241 0 0 1 679.8,519.0 V556.6 Z" fill="#8f969e" stroke="#111" stroke-width="1"/>
<path d="M598.4,556 V521.5 A44.10337552742612,44.10337552742612 0 0 1 676.5999999999999,521.5 V556 Z" fill="#bfc6d0"/>
<clipPath id="cg1"><path d="M597.6,556.6 V519.0 A43.06705298013241,43.06705298013241 0 0 1 679.8,519.0 V556.6 Z"/></clipPath><g clip-path="url(#cg1)">
<rect x="616.65" y="486.8" width="3.0" height="69.8" fill="#111" stroke="none" stroke-width="1.0" />
<rect x="617.4" y="486.8" width="1.5" height="69.5" fill="#fff" stroke="none" stroke-width="1.0" />
<rect x="637.2" y="486.8" width="3.0" height="69.8" fill="#111" stroke="none" stroke-width="1.0" />
<rect x="637.95" y="486.8" width="1.5" height="69.5" fill="#fff" stroke="none" stroke-width="1.0" />
<rect x="657.75" y="486.8" width="3.0" height="69.8" fill="#111" stroke="none" stroke-width="1.0" />
<rect x="658.5" y="486.8" width="1.5" height="69.5" fill="#fff" stroke="none" stroke-width="1.0" />
</g>
<rect x="597.6" y="521.1" width="82.2" height="3.0" fill="#111" stroke="none" stroke-width="1.0" />
<rect x="597.6" y="521.9" width="82.2" height="1.4" fill="#fff" stroke="none" stroke-width="1.0" />
<rect x="617.4" y="521.1" width="1.5" height="3.0" fill="#fff" stroke="none" stroke-width="1.0" />
<rect x="637.95" y="521.1" width="1.5" height="3.0" fill="#fff" stroke="none" stroke-width="1.0" />
<rect x="658.5" y="521.1" width="1.5" height="3.0" fill="#fff" stroke="none" stroke-width="1.0" />
<rect x="677.5999999999999" y="524.1" width="1.7" height="32.2" fill="#8f969e" stroke="none" stroke-width="1.0" />
<rect x="595.7" y="588.2" width="85.6" height="71.0" fill="#111" stroke="none" stroke-width="1.0" />
<rect x="596.6" y="589.1" width="83.8" height="69.2" fill="#fff" stroke="none" stroke-width="1.0" />
<rect x="598.1" y="590.5" width="18.1" height="19.1" fill="#111" stroke="none" stroke-width="1.0" />
<rect x="598.8000000000001" y="591.2" width="16.7" height="17.6" fill="#bfc6d0" stroke="none" stroke-width="1.0" />
<rect x="597.6" y="611.2" width="19.1" height="47.7" fill="#111" stroke="none" stroke-width="1.0" />
<rect x="599.4000000000001" y="612.8000000000001" width="15.5" height="44.3" fill="#bfc6d0" stroke="none" stroke-width="1.0" />
<rect x="598.0" y="611.8000000000001" width="0.6" height="46.4" fill="#fff" stroke="none" stroke-width="1.0" />
<rect x="619.0" y="590.5" width="18.1" height="19.1" fill="#111" stroke="none" stroke-width="1.0" />
<rect x="619.7" y="591.2" width="16.7" height="17.6" fill="#bfc6d0" stroke="none" stroke-width="1.0" />
<rect x="618.5" y="611.2" width="19.1" height="47.7" fill="#111" stroke="none" stroke-width="1.0" />
<rect x="620.3000000000001" y="612.8000000000001" width="15.5" height="44.3" fill="#bfc6d0" stroke="none" stroke-width="1.0" />
<rect x="618.9" y="611.8000000000001" width="0.6" height="46.4" fill="#fff" stroke="none" stroke-width="1.0" />
<rect x="639.9" y="590.5" width="18.1" height="19.1" fill="#111" stroke="none" stroke-width="1.0" />
<rect x="640.6" y="591.2" width="16.7" height="17.6" fill="#bfc6d0" stroke="none" stroke-width="1.0" />
<rect x="639.4" y="611.2" width="19.1" height="47.7" fill="#111" stroke="none" stroke-width="1.0" />
<rect x="641.2" y="612.8000000000001" width="15.5" height="44.3" fill="#bfc6d0" stroke="none" stroke-width="1.0" />
<rect x="639.8" y="611.8000000000001" width="0.6" height="46.4" fill="#fff" stroke="none" stroke-width="1.0" />
<rect x="660.8" y="590.5" width="18.1" height="19.1" fill="#111" stroke="none" stroke-width="1.0" />
<rect x="661.5" y="591.2" width="16.7" height="17.6" fill="#bfc6d0" stroke="none" stroke-width="1.0" />
<rect x="660.3" y="611.2" width="19.1" height="47.7" fill="#111" stroke="none" stroke-width="1.0" />
<rect x="662.1" y="612.8000000000001" width="15.5" height="44.3" fill="#bfc6d0" stroke="none" stroke-width="1.0" />
<rect x="660.6999999999999" y="611.8000000000001" width="0.6" height="46.4" fill="#fff" stroke="none" stroke-width="1.0" />
<rect x="674.8" y="591.2" width="4.3" height="17.6" fill="#8f969e" stroke="none" stroke-width="1.0" />
<rect x="675.0999999999999" y="612.8000000000001" width="2.5" height="44.3" fill="#8f969e" stroke="none" stroke-width="1.0" />
<rect x="595.7" y="657.4000000000001" width="85.6" height="1.8" fill="#111" stroke="none" stroke-width="1.0" />
<rect x="595.7" y="689.5" width="85.6" height="71.0" fill="#111" stroke="none" stroke-width="1.0" />
<rect x="596.6" y="690.4" width="83.8" height="69.2" fill="#fff" stroke="none" stroke-width="1.0" />
<rect x="598.1" y="691.8" width="18.1" height="19.1" fill="#111" stroke="none" stroke-width="1.0" />
<rect x="598.8000000000001" y="692.5" width="16.7" height="17.6" fill="#bfc6d0" stroke="none" stroke-width="1.0" />
<rect x="597.6" y="712.5" width="19.1" height="47.7" fill="#111" stroke="none" stroke-width="1.0" />
<rect x="599.4000000000001" y="714.1" width="15.5" height="44.3" fill="#bfc6d0" stroke="none" stroke-width="1.0" />
<rect x="598.0" y="713.1" width="0.6" height="46.4" fill="#fff" stroke="none" stroke-width="1.0" />
<rect x="619.0" y="691.8" width="18.1" height="19.1" fill="#111" stroke="none" stroke-width="1.0" />
<rect x="619.7" y="692.5" width="16.7" height="17.6" fill="#bfc6d0" stroke="none" stroke-width="1.0" />
<rect x="618.5" y="712.5" width="19.1" height="47.7" fill="#111" stroke="none" stroke-width="1.0" />
<rect x="620.3000000000001" y="714.1" width="15.5" height="44.3" fill="#bfc6d0" stroke="none" stroke-width="1.0" />
<rect x="618.9" y="713.1" width="0.6" height="46.4" fill="#fff" stroke="none" stroke-width="1.0" />
<rect x="639.9" y="691.8" width="18.1" height="19.1" fill="#111" stroke="none" stroke-width="1.0" />
<rect x="640.6" y="692.5" width="16.7" height="17.6" fill="#bfc6d0" stroke="none" stroke-width="1.0" />
<rect x="639.4" y="712.5" width="19.1" height="47.7" fill="#111" stroke="none" stroke-width="1.0" />
<rect x="641.2" y="714.1" width="15.5" height="44.3" fill="#bfc6d0" stroke="none" stroke-width="1.0" />
<rect x="639.8" y="713.1" width="0.6" height="46.4" fill="#fff" stroke="none" stroke-width="1.0" />
<rect x="660.8" y="691.8" width="18.1" height="19.1" fill="#111" stroke="none" stroke-width="1.0" />
<rect x="661.5" y="692.5" width="16.7" height="17.6" fill="#bfc6d0" stroke="none" stroke-width="1.0" />
<rect x="660.3" y="712.5" width="19.1" height="47.7" fill="#111" stroke="none" stroke-width="1.0" />
<rect x="662.1" y="714.1" width="15.5" height="44.3" fill="#bfc6d0" stroke="none" stroke-width="1.0" />
<rect x="660.6999999999999" y="713.1" width="0.6" height="46.4" fill="#fff" stroke="none" stroke-width="1.0" />
<rect x="674.8" y="692.5" width="4.3" height="17.6" fill="#8f969e" stroke="none" stroke-width="1.0" />
<rect x="675.0999999999999" y="714.1" width="2.5" height="44.3" fill="#8f969e" stroke="none" stroke-width="1.0" />
<rect x="595.7" y="758.7" width="85.6" height="1.8" fill="#111" stroke="none" stroke-width="1.0" />
<path d="M707.5,526.0 V517.5 A50.63168960244652,50.63168960244652 0 0 1 802.2,517.5 V526.0 Z" fill="#ecc636" stroke="#111" stroke-width="1.1"/>
<rect x="707.5" y="526.0" width="3.1" height="245.3" fill="#3558e2" stroke="none" stroke-width="1.0" />
<line x1="707.9" y1="525.5" x2="707.9" y2="771.3" stroke="#111" stroke-width="1"/>
<rect x="799.1" y="526.0" width="3.1" height="245.3" fill="#2b43b0" stroke="none" stroke-width="1.0" />
<line x1="799.1" y1="525.5" x2="799.1" y2="771.3" stroke="#111" stroke-width="1"/>
<line x1="801.8000000000001" y1="525.5" x2="801.8000000000001" y2="771.3" stroke="#111" stroke-width="0.8"/>
<rect x="710.6" y="558.4" width="88.5" height="212.9" fill="#ecc636" stroke="none" stroke-width="1.0" />
<rect x="795.0" y="558.4" width="4.1" height="212.9" fill="#b89a2c" stroke="none" stroke-width="1.0" />
<path d="M710.6,558.4 V518.5 A47.014077287066236,47.014077287066236 0 0 1 799.5,518.5 V558.4 Z" fill="#fff" stroke="#111" stroke-width="1.1"/>
<path d="M712.6,556.6 V519.0 A44.934478476821184,44.934478476821184 0 0 1 797.5,519.0 V556.6 Z" fill="#8f969e" stroke="#111" stroke-width="1"/>
<path d="M713.4,556 V521.5 A46.369040084388175,46.369040084388175 0 0 1 794.3,521.5 V556 Z" fill="#bfc6d0"/>
<clipPath id="cg2"><path d="M712.6,556.6 V519.0 A44.934478476821184,44.934478476821184 0 0 1 797.5,519.0 V556.6 Z"/></clipPath><g clip-path="url(#cg2)">
<rect x="732.325" y="486.8" width="3.0" height="69.8" fill="#111" stroke="none" stroke-width="1.0" />
<rect x="733.075" y="486.8" width="1.5" height="69.5" fill="#fff" stroke="none" stroke-width="1.0" />
<rect x="753.55" y="486.8" width="3.0" height="69.8" fill="#111" stroke="none" stroke-width="1.0" />
<rect x="754.3" y="486.8" width="1.5" height="69.5" fill="#fff" stroke="none" stroke-width="1.0" />
<rect x="774.775" y="486.8" width="3.0" height="69.8" fill="#111" stroke="none" stroke-width="1.0" />
<rect x="775.525" y="486.8" width="1.5" height="69.5" fill="#fff" stroke="none" stroke-width="1.0" />
</g>
<rect x="712.6" y="521.1" width="84.9" height="3.0" fill="#111" stroke="none" stroke-width="1.0" />
<rect x="712.6" y="521.9" width="84.9" height="1.4" fill="#fff" stroke="none" stroke-width="1.0" />
<rect x="733.075" y="521.1" width="1.5" height="3.0" fill="#fff" stroke="none" stroke-width="1.0" />
<rect x="754.3" y="521.1" width="1.5" height="3.0" fill="#fff" stroke="none" stroke-width="1.0" />
<rect x="775.525" y="521.1" width="1.5" height="3.0" fill="#fff" stroke="none" stroke-width="1.0" />
<rect x="795.3" y="524.1" width="1.7" height="32.2" fill="#8f969e" stroke="none" stroke-width="1.0" />
<rect x="710.7" y="588.2" width="88.3" height="71.0" fill="#111" stroke="none" stroke-width="1.0" />
<rect x="711.6" y="589.1" width="86.5" height="69.2" fill="#fff" stroke="none" stroke-width="1.0" />
<rect x="713.1" y="590.5" width="18.78" height="19.1" fill="#111" stroke="none" stroke-width="1.0" />
<rect x="713.8000000000001" y="591.2" width="17.38" height="17.6" fill="#bfc6d0" stroke="none" stroke-width="1.0" />
<rect x="712.6" y="611.2" width="19.78" height="47.7" fill="#111" stroke="none" stroke-width="1.0" />
<rect x="714.4000000000001" y="612.8000000000001" width="16.17" height="44.3" fill="#bfc6d0" stroke="none" stroke-width="1.0" />
<rect x="713.0" y="611.8000000000001" width="0.6" height="46.4" fill="#fff" stroke="none" stroke-width="1.0" />
<rect x="734.6750000000001" y="590.5" width="18.78" height="19.1" fill="#111" stroke="none" stroke-width="1.0" />
<rect x="735.3750000000001" y="591.2" width="17.38" height="17.6" fill="#bfc6d0" stroke="none" stroke-width="1.0" />
<rect x="734.1750000000001" y="611.2" width="19.78" height="47.7" fill="#111" stroke="none" stroke-width="1.0" />
<rect x="735.9750000000001" y="612.8000000000001" width="16.17" height="44.3" fill="#bfc6d0" stroke="none" stroke-width="1.0" />
<rect x="734.575" y="611.8000000000001" width="0.6" height="46.4" fill="#fff" stroke="none" stroke-width="1.0" />
<rect x="756.25" y="590.5" width="18.77" height="19.1" fill="#111" stroke="none" stroke-width="1.0" />
<rect x="756.95" y="591.2" width="17.37" height="17.6" fill="#bfc6d0" stroke="none" stroke-width="1.0" />
<rect x="755.75" y="611.2" width="19.77" height="47.7" fill="#111" stroke="none" stroke-width="1.0" />
<rect x="757.5500000000001" y="612.8000000000001" width="16.17" height="44.3" fill="#bfc6d0" stroke="none" stroke-width="1.0" />
<rect x="756.15" y="611.8000000000001" width="0.6" height="46.4" fill="#fff" stroke="none" stroke-width="1.0" />
<rect x="777.8249999999999" y="590.5" width="18.78" height="19.1" fill="#111" stroke="none" stroke-width="1.0" />
<rect x="778.525" y="591.2" width="17.38" height="17.6" fill="#bfc6d0" stroke="none" stroke-width="1.0" />
<rect x="777.3249999999999" y="611.2" width="19.78" height="47.7" fill="#111" stroke="none" stroke-width="1.0" />
<rect x="779.125" y="612.8000000000001" width="16.17" height="44.3" fill="#bfc6d0" stroke="none" stroke-width="1.0" />
<rect x="777.7249999999999" y="611.8000000000001" width="0.6" height="46.4" fill="#fff" stroke="none" stroke-width="1.0" />
<rect x="792.5" y="591.2" width="4.3" height="17.6" fill="#8f969e" stroke="none" stroke-width="1.0" />
<rect x="792.8" y="612.8000000000001" width="2.5" height="44.3" fill="#8f969e" stroke="none" stroke-width="1.0" />
<rect x="710.7" y="657.4000000000001" width="88.3" height="1.8" fill="#111" stroke="none" stroke-width="1.0" />
<rect x="710.7" y="689.5" width="88.3" height="71.0" fill="#111" stroke="none" stroke-width="1.0" />
<rect x="711.6" y="690.4" width="86.5" height="69.2" fill="#fff" stroke="none" stroke-width="1.0" />
<rect x="713.1" y="691.8" width="18.78" height="19.1" fill="#111" stroke="none" stroke-width="1.0" />
<rect x="713.8000000000001" y="692.5" width="17.38" height="17.6" fill="#bfc6d0" stroke="none" stroke-width="1.0" />
<rect x="712.6" y="712.5" width="19.78" height="47.7" fill="#111" stroke="none" stroke-width="1.0" />
<rect x="714.4000000000001" y="714.1" width="16.17" height="44.3" fill="#bfc6d0" stroke="none" stroke-width="1.0" />
<rect x="713.0" y="713.1" width="0.6" height="46.4" fill="#fff" stroke="none" stroke-width="1.0" />
<rect x="734.6750000000001" y="691.8" width="18.78" height="19.1" fill="#111" stroke="none" stroke-width="1.0" />
<rect x="735.3750000000001" y="692.5" width="17.38" height="17.6" fill="#bfc6d0" stroke="none" stroke-width="1.0" />
<rect x="734.1750000000001" y="712.5" width="19.78" height="47.7" fill="#111" stroke="none" stroke-width="1.0" />
<rect x="735.9750000000001" y="714.1" width="16.17" height="44.3" fill="#bfc6d0" stroke="none" stroke-width="1.0" />
<rect x="734.575" y="713.1" width="0.6" height="46.4" fill="#fff" stroke="none" stroke-width="1.0" />
<rect x="756.25" y="691.8" width="18.77" height="19.1" fill="#111" stroke="none" stroke-width="1.0" />
<rect x="756.95" y="692.5" width="17.37" height="17.6" fill="#bfc6d0" stroke="none" stroke-width="1.0" />
<rect x="755.75" y="712.5" width="19.77" height="47.7" fill="#111" stroke="none" stroke-width="1.0" />
<rect x="757.5500000000001" y="714.1" width="16.17" height="44.3" fill="#bfc6d0" stroke="none" stroke-width="1.0" />
<rect x="756.15" y="713.1" width="0.6" height="46.4" fill="#fff" stroke="none" stroke-width="1.0" />
<rect x="777.8249999999999" y="691.8" width="18.78" height="19.1" fill="#111" stroke="none" stroke-width="1.0" />
<rect x="778.525" y="692.5" width="17.38" height="17.6" fill="#bfc6d0" stroke="none" stroke-width="1.0" />
<rect x="777.3249999999999" y="712.5" width="19.78" height="47.7" fill="#111" stroke="none" stroke-width="1.0" />
<rect x="779.125" y="714.1" width="16.17" height="44.3" fill="#bfc6d0" stroke="none" stroke-width="1.0" />
<rect x="777.7249999999999" y="713.1" width="0.6" height="46.4" fill="#fff" stroke="none" stroke-width="1.0" />
<rect x="792.5" y="692.5" width="4.3" height="17.6" fill="#8f969e" stroke="none" stroke-width="1.0" />
<rect x="792.8" y="714.1" width="2.5" height="44.3" fill="#8f969e" stroke="none" stroke-width="1.0" />
<rect x="710.7" y="758.7" width="88.3" height="1.8" fill="#111" stroke="none" stroke-width="1.0" />
<path d="M825,526.0 V517.5 A48.70474006116208,48.70474006116208 0 0 1 917,517.5 V526.0 Z" fill="#ecc636" stroke="#111" stroke-width="1.1"/>
<rect x="825" y="526.0" width="3.1" height="245.3" fill="#3558e2" stroke="none" stroke-width="1.0" />
<line x1="825.4" y1="525.5" x2="825.4" y2="771.3" stroke="#111" stroke-width="1"/>
<rect x="913.9" y="526.0" width="3.1" height="245.3" fill="#2b43b0" stroke="none" stroke-width="1.0" />
<line x1="913.9" y1="525.5" x2="913.9" y2="771.3" stroke="#111" stroke-width="1"/>
<line x1="916.6" y1="525.5" x2="916.6" y2="771.3" stroke="#111" stroke-width="0.8"/>
<rect x="828.1" y="558.4" width="85.8" height="212.9" fill="#ecc636" stroke="none" stroke-width="1.0" />
<rect x="909.8" y="558.4" width="4.1" height="212.9" fill="#b89a2c" stroke="none" stroke-width="1.0" />
<path d="M828.1,558.4 V518.5 A45.14984227129334,45.14984227129334 0 0 1 914.3,518.5 V558.4 Z" fill="#fff" stroke="#111" stroke-width="1.1"/>
<path d="M830.1,556.6 V519.0 A43.06705298013241,43.06705298013241 0 0 1 912.3,519.0 V556.6 Z" fill="#8f969e" stroke="#111" stroke-width="1"/>
<path d="M830.9,556 V521.5 A44.10337552742612,44.10337552742612 0 0 1 909.0999999999999,521.5 V556 Z" fill="#bfc6d0"/>
<clipPath id="cg3"><path d="M830.1,556.6 V519.0 A43.06705298013241,43.06705298013241 0 0 1 912.3,519.0 V556.6 Z"/></clipPath><g clip-path="url(#cg3)">
<rect x="849.15" y="486.8" width="3.0" height="69.8" fill="#111" stroke="none" stroke-width="1.0" />
<rect x="849.9" y="486.8" width="1.5" height="69.5" fill="#fff" stroke="none" stroke-width="1.0" />
<rect x="869.7" y="486.8" width="3.0" height="69.8" fill="#111" stroke="none" stroke-width="1.0" />
<rect x="870.45" y="486.8" width="1.5" height="69.5" fill="#fff" stroke="none" stroke-width="1.0" />
<rect x="890.25" y="486.8" width="3.0" height="69.8" fill="#111" stroke="none" stroke-width="1.0" />
<rect x="891.0" y="486.8" width="1.5" height="69.5" fill="#fff" stroke="none" stroke-width="1.0" />
</g>
<rect x="830.1" y="521.1" width="82.2" height="3.0" fill="#111" stroke="none" stroke-width="1.0" />
<rect x="830.1" y="521.9" width="82.2" height="1.4" fill="#fff" stroke="none" stroke-width="1.0" />
<rect x="849.9" y="521.1" width="1.5" height="3.0" fill="#fff" stroke="none" stroke-width="1.0" />
<rect x="870.45" y="521.1" width="1.5" height="3.0" fill="#fff" stroke="none" stroke-width="1.0" />
<rect x="891.0" y="521.1" width="1.5" height="3.0" fill="#fff" stroke="none" stroke-width="1.0" />
<rect x="910.0999999999999" y="524.1" width="1.7" height="32.2" fill="#8f969e" stroke="none" stroke-width="1.0" />
<rect x="828.2" y="588.2" width="85.6" height="71.0" fill="#111" stroke="none" stroke-width="1.0" />
<rect x="829.1" y="589.1" width="83.8" height="69.2" fill="#fff" stroke="none" stroke-width="1.0" />
<rect x="830.6" y="590.5" width="18.1" height="19.1" fill="#111" stroke="none" stroke-width="1.0" />
<rect x="831.3000000000001" y="591.2" width="16.7" height="17.6" fill="#bfc6d0" stroke="none" stroke-width="1.0" />
<rect x="830.1" y="611.2" width="19.1" height="47.7" fill="#111" stroke="none" stroke-width="1.0" />
<rect x="831.9000000000001" y="612.8000000000001" width="15.5" height="44.3" fill="#bfc6d0" stroke="none" stroke-width="1.0" />
<rect x="830.5" y="611.8000000000001" width="0.6" height="46.4" fill="#fff" stroke="none" stroke-width="1.0" />
<rect x="851.5" y="590.5" width="18.1" height="19.1" fill="#111" stroke="none" stroke-width="1.0" />
<rect x="852.2" y="591.2" width="16.7" height="17.6" fill="#bfc6d0" stroke="none" stroke-width="1.0" />
<rect x="851.0" y="611.2" width="19.1" height="47.7" fill="#111" stroke="none" stroke-width="1.0" />
<rect x="852.8000000000001" y="612.8000000000001" width="15.5" height="44.3" fill="#bfc6d0" stroke="none" stroke-width="1.0" />
<rect x="851.4" y="611.8000000000001" width="0.6" height="46.4" fill="#fff" stroke="none" stroke-width="1.0" />
<rect x="872.4" y="590.5" width="18.1" height="19.1" fill="#111" stroke="none" stroke-width="1.0" />
<rect x="873.1" y="591.2" width="16.7" height="17.6" fill="#bfc6d0" stroke="none" stroke-width="1.0" />
<rect x="871.9" y="611.2" width="19.1" height="47.7" fill="#111" stroke="none" stroke-width="1.0" />
<rect x="873.7" y="612.8000000000001" width="15.5" height="44.3" fill="#bfc6d0" stroke="none" stroke-width="1.0" />
<rect x="872.3" y="611.8000000000001" width="0.6" height="46.4" fill="#fff" stroke="none" stroke-width="1.0" />
<rect x="893.3" y="590.5" width="18.1" height="19.1" fill="#111" stroke="none" stroke-width="1.0" />
<rect x="894.0" y="591.2" width="16.7" height="17.6" fill="#bfc6d0" stroke="none" stroke-width="1.0" />
<rect x="892.8" y="611.2" width="19.1" height="47.7" fill="#111" stroke="none" stroke-width="1.0" />
<rect x="894.6" y="612.8000000000001" width="15.5" height="44.3" fill="#bfc6d0" stroke="none" stroke-width="1.0" />
<rect x="893.1999999999999" y="611.8000000000001" width="0.6" height="46.4" fill="#fff" stroke="none" stroke-width="1.0" />
<rect x="907.3" y="591.2" width="4.3" height="17.6" fill="#8f969e" stroke="none" stroke-width="1.0" />
<rect x="907.5999999999999" y="612.8000000000001" width="2.5" height="44.3" fill="#8f969e" stroke="none" stroke-width="1.0" />
<rect x="828.2" y="657.4000000000001" width="85.6" height="1.8" fill="#111" stroke="none" stroke-width="1.0" />
<rect x="828.2" y="689.5" width="85.6" height="71.0" fill="#111" stroke="none" stroke-width="1.0" />
<rect x="829.1" y="690.4" width="83.8" height="69.2" fill="#fff" stroke="none" stroke-width="1.0" />
<rect x="830.6" y="691.8" width="18.1" height="19.1" fill="#111" stroke="none" stroke-width="1.0" />
<rect x="831.3000000000001" y="692.5" width="16.7" height="17.6" fill="#bfc6d0" stroke="none" stroke-width="1.0" />
<rect x="830.1" y="712.5" width="19.1" height="47.7" fill="#111" stroke="none" stroke-width="1.0" />
<rect x="831.9000000000001" y="714.1" width="15.5" height="44.3" fill="#bfc6d0" stroke="none" stroke-width="1.0" />
<rect x="830.5" y="713.1" width="0.6" height="46.4" fill="#fff" stroke="none" stroke-width="1.0" />
<rect x="851.5" y="691.8" width="18.1" height="19.1" fill="#111" stroke="none" stroke-width="1.0" />
<rect x="852.2" y="692.5" width="16.7" height="17.6" fill="#bfc6d0" stroke="none" stroke-width="1.0" />
<rect x="851.0" y="712.5" width="19.1" height="47.7" fill="#111" stroke="none" stroke-width="1.0" />
<rect x="852.8000000000001" y="714.1" width="15.5" height="44.3" fill="#bfc6d0" stroke="none" stroke-width="1.0" />
<rect x="851.4" y="713.1" width="0.6" height="46.4" fill="#fff" stroke="none" stroke-width="1.0" />
<rect x="872.4" y="691.8" width="18.1" height="19.1" fill="#111" stroke="none" stroke-width="1.0" />
<rect x="873.1" y="692.5" width="16.7" height="17.6" fill="#bfc6d0" stroke="none" stroke-width="1.0" />
<rect x="871.9" y="712.5" width="19.1" height="47.7" fill="#111" stroke="none" stroke-width="1.0" />
<rect x="873.7" y="714.1" width="15.5" height="44.3" fill="#bfc6d0" stroke="none" stroke-width="1.0" />
<rect x="872.3" y="713.1" width="0.6" height="46.4" fill="#fff" stroke="none" stroke-width="1.0" />
<rect x="893.3" y="691.8" width="18.1" height="19.1" fill="#111" stroke="none" stroke-width="1.0" />
<rect x="894.0" y="692.5" width="16.7" height="17.6" fill="#bfc6d0" stroke="none" stroke-width="1.0" />
<rect x="892.8" y="712.5" width="19.1" height="47.7" fill="#111" stroke="none" stroke-width="1.0" />
<rect x="894.6" y="714.1" width="15.5" height="44.3" fill="#bfc6d0" stroke="none" stroke-width="1.0" />
<rect x="893.1999999999999" y="713.1" width="0.6" height="46.4" fill="#fff" stroke="none" stroke-width="1.0" />
<rect x="907.3" y="692.5" width="4.3" height="17.6" fill="#8f969e" stroke="none" stroke-width="1.0" />
<rect x="907.5999999999999" y="714.1" width="2.5" height="44.3" fill="#8f969e" stroke="none" stroke-width="1.0" />
<rect x="828.2" y="758.7" width="85.6" height="1.8" fill="#111" stroke="none" stroke-width="1.0" />
<path d="M940,526.0 V517.5 A64.30107033639143,64.30107033639143 0 0 1 1052,517.5 V526.0 Z" fill="#ecc636" stroke="#111" stroke-width="1.1"/>
<rect x="940" y="526.0" width="3.1" height="245.3" fill="#3558e2" stroke="none" stroke-width="1.0" />
<line x1="940.4" y1="525.5" x2="940.4" y2="771.3" stroke="#111" stroke-width="1"/>
<rect x="1048.9" y="526.0" width="3.1" height="245.3" fill="#2b43b0" stroke="none" stroke-width="1.0" />
<line x1="1048.9" y1="525.5" x2="1048.9" y2="771.3" stroke="#111" stroke-width="1"/>
<line x1="1051.6" y1="525.5" x2="1051.6" y2="771.3" stroke="#111" stroke-width="0.8"/>
<rect x="943.1" y="558.4" width="105.8" height="212.9" fill="#ecc636" stroke="none" stroke-width="1.0" />
<rect x="1044.8" y="558.4" width="4.1" height="212.9" fill="#b89a2c" stroke="none" stroke-width="1.0" />
<path d="M943.1,558.4 V518.5 A60.3233438485804,60.3233438485804 0 0 1 1049.3,518.5 V558.4 Z" fill="#fff" stroke="#111" stroke-width="1.1"/>
<path d="M945.1,556.6 V519.0 A58.33195364238405,58.33195364238405 0 0 1 1047.3,519.0 V556.6 Z" fill="#8f969e" stroke="#111" stroke-width="1"/>
<path d="M945.9,556 V521.5 A62.710970464134974,62.710970464134974 0 0 1 1044.1,521.5 V556 Z" fill="#bfc6d0"/>
<clipPath id="cg4"><path d="M945.1,556.6 V519.0 A58.33195364238405,58.33195364238405 0 0 1 1047.3,519.0 V556.6 Z"/></clipPath><g clip-path="url(#cg4)">
<rect x="969.15" y="486.8" width="3.0" height="69.8" fill="#111" stroke="none" stroke-width="1.0" />
<rect x="969.9" y="486.8" width="1.5" height="69.5" fill="#fff" stroke="none" stroke-width="1.0" />
<rect x="994.7" y="486.8" width="3.0" height="69.8" fill="#111" stroke="none" stroke-width="1.0" />
<rect x="995.45" y="486.8" width="1.5" height="69.5" fill="#fff" stroke="none" stroke-width="1.0" />
<rect x="1020.25" y="486.8" width="3.0" height="69.8" fill="#111" stroke="none" stroke-width="1.0" />
<rect x="1021.0" y="486.8" width="1.5" height="69.5" fill="#fff" stroke="none" stroke-width="1.0" />
</g>
<rect x="945.1" y="521.1" width="102.2" height="3.0" fill="#111" stroke="none" stroke-width="1.0" />
<rect x="945.1" y="521.9" width="102.2" height="1.4" fill="#fff" stroke="none" stroke-width="1.0" />
<rect x="969.9" y="521.1" width="1.5" height="3.0" fill="#fff" stroke="none" stroke-width="1.0" />
<rect x="995.45" y="521.1" width="1.5" height="3.0" fill="#fff" stroke="none" stroke-width="1.0" />
<rect x="1021.0" y="521.1" width="1.5" height="3.0" fill="#fff" stroke="none" stroke-width="1.0" />
<rect x="1045.1" y="524.1" width="1.7" height="32.2" fill="#8f969e" stroke="none" stroke-width="1.0" />
<rect x="943.2" y="588.2" width="105.6" height="71.0" fill="#111" stroke="none" stroke-width="1.0" />
<rect x="944.1" y="589.1" width="103.8" height="69.2" fill="#fff" stroke="none" stroke-width="1.0" />
<rect x="945.6" y="590.5" width="23.1" height="19.1" fill="#111" stroke="none" stroke-width="1.0" />
<rect x="946.3000000000001" y="591.2" width="21.7" height="17.6" fill="#bfc6d0" stroke="none" stroke-width="1.0" />
<rect x="945.1" y="611.2" width="24.1" height="47.7" fill="#111" stroke="none" stroke-width="1.0" />
<rect x="946.9000000000001" y="612.8000000000001" width="20.5" height="44.3" fill="#bfc6d0" stroke="none" stroke-width="1.0" />
<rect x="945.5" y="611.8000000000001" width="0.6" height="46.4" fill="#fff" stroke="none" stroke-width="1.0" />
<rect x="971.5" y="590.5" width="23.1" height="19.1" fill="#111" stroke="none" stroke-width="1.0" />
<rect x="972.2" y="591.2" width="21.7" height="17.6" fill="#bfc6d0" stroke="none" stroke-width="1.0" />
<rect x="971.0" y="611.2" width="24.1" height="47.7" fill="#111" stroke="none" stroke-width="1.0" />
<rect x="972.8000000000001" y="612.8000000000001" width="20.5" height="44.3" fill="#bfc6d0" stroke="none" stroke-width="1.0" />
<rect x="971.4" y="611.8000000000001" width="0.6" height="46.4" fill="#fff" stroke="none" stroke-width="1.0" />
<rect x="997.4" y="590.5" width="23.1" height="19.1" fill="#111" stroke="none" stroke-width="1.0" />
<rect x="998.1" y="591.2" width="21.7" height="17.6" fill="#bfc6d0" stroke="none" stroke-width="1.0" />
<rect x="996.9" y="611.2" width="24.1" height="47.7" fill="#111" stroke="none" stroke-width="1.0" />
<rect x="998.7" y="612.8000000000001" width="20.5" height="44.3" fill="#bfc6d0" stroke="none" stroke-width="1.0" />
<rect x="997.3" y="611.8000000000001" width="0.6" height="46.4" fill="#fff" stroke="none" stroke-width="1.0" />
<rect x="1023.3" y="590.5" width="23.1" height="19.1" fill="#111" stroke="none" stroke-width="1.0" />
<rect x="1024.0" y="591.2" width="21.7" height="17.6" fill="#bfc6d0" stroke="none" stroke-width="1.0" />
<rect x="1022.8" y="611.2" width="24.1" height="47.7" fill="#111" stroke="none" stroke-width="1.0" />
<rect x="1024.6" y="612.8000000000001" width="20.5" height="44.3" fill="#bfc6d0" stroke="none" stroke-width="1.0" />
<rect x="1023.1999999999999" y="611.8000000000001" width="0.6" height="46.4" fill="#fff" stroke="none" stroke-width="1.0" />
<rect x="1042.3" y="591.2" width="4.3" height="17.6" fill="#8f969e" stroke="none" stroke-width="1.0" />
<rect x="1042.6" y="612.8000000000001" width="2.5" height="44.3" fill="#8f969e" stroke="none" stroke-width="1.0" />
<rect x="943.2" y="657.4000000000001" width="105.6" height="1.8" fill="#111" stroke="none" stroke-width="1.0" />
<rect x="943.2" y="689.5" width="105.6" height="71.0" fill="#111" stroke="none" stroke-width="1.0" />
<rect x="944.1" y="690.4" width="103.8" height="69.2" fill="#fff" stroke="none" stroke-width="1.0" />
<rect x="945.6" y="691.8" width="23.1" height="19.1" fill="#111" stroke="none" stroke-width="1.0" />
<rect x="946.3000000000001" y="692.5" width="21.7" height="17.6" fill="#bfc6d0" stroke="none" stroke-width="1.0" />
<rect x="945.1" y="712.5" width="24.1" height="47.7" fill="#111" stroke="none" stroke-width="1.0" />
<rect x="946.9000000000001" y="714.1" width="20.5" height="44.3" fill="#bfc6d0" stroke="none" stroke-width="1.0" />
<rect x="945.5" y="713.1" width="0.6" height="46.4" fill="#fff" stroke="none" stroke-width="1.0" />
<rect x="971.5" y="691.8" width="23.1" height="19.1" fill="#111" stroke="none" stroke-width="1.0" />
<rect x="972.2" y="692.5" width="21.7" height="17.6" fill="#bfc6d0" stroke="none" stroke-width="1.0" />
<rect x="971.0" y="712.5" width="24.1" height="47.7" fill="#111" stroke="none" stroke-width="1.0" />
<rect x="972.8000000000001" y="714.1" width="20.5" height="44.3" fill="#bfc6d0" stroke="none" stroke-width="1.0" />
<rect x="971.4" y="713.1" width="0.6" height="46.4" fill="#fff" stroke="none" stroke-width="1.0" />
<rect x="997.4" y="691.8" width="23.1" height="19.1" fill="#111" stroke="none" stroke-width="1.0" />
<rect x="998.1" y="692.5" width="21.7" height="17.6" fill="#bfc6d0" stroke="none" stroke-width="1.0" />
<rect x="996.9" y="712.5" width="24.1" height="47.7" fill="#111" stroke="none" stroke-width="1.0" />
<rect x="998.7" y="714.1" width="20.5" height="44.3" fill="#bfc6d0" stroke="none" stroke-width="1.0" />
<rect x="997.3" y="713.1" width="0.6" height="46.4" fill="#fff" stroke="none" stroke-width="1.0" />
<rect x="1023.3" y="691.8" width="23.1" height="19.1" fill="#111" stroke="none" stroke-width="1.0" />
<rect x="1024.0" y="692.5" width="21.7" height="17.6" fill="#bfc6d0" stroke="none" stroke-width="1.0" />
<rect x="1022.8" y="712.5" width="24.1" height="47.7" fill="#111" stroke="none" stroke-width="1.0" />
<rect x="1024.6" y="714.1" width="20.5" height="44.3" fill="#bfc6d0" stroke="none" stroke-width="1.0" />
<rect x="1023.1999999999999" y="713.1" width="0.6" height="46.4" fill="#fff" stroke="none" stroke-width="1.0" />
<rect x="1042.3" y="692.5" width="4.3" height="17.6" fill="#8f969e" stroke="none" stroke-width="1.0" />
<rect x="1042.6" y="714.1" width="2.5" height="44.3" fill="#8f969e" stroke="none" stroke-width="1.0" />
<rect x="943.2" y="758.7" width="105.6" height="1.8" fill="#111" stroke="none" stroke-width="1.0" />
<line x1="582" y1="526" x2="592.5" y2="526" stroke="#111" stroke-width="1"/>
<line x1="684.5" y1="526" x2="707.5" y2="526" stroke="#111" stroke-width="1"/>
<line x1="802.2" y1="526" x2="825" y2="526" stroke="#111" stroke-width="1"/>
<line x1="917" y1="526" x2="940" y2="526" stroke="#111" stroke-width="1"/>
<line x1="1052" y1="526" x2="1076.3" y2="526" stroke="#111" stroke-width="1"/>
<polygon points="440,771.3 1116.4,771.3 1116.4,895.8 1098,895.8 1098,874 440,900.5" fill="#3558e2" stroke="#111" stroke-width="1.2" stroke-linejoin="round" />
<polygon points="358,774.4 440,774.4 440,900.5 358,904" fill="#2b43b0" stroke="#111" stroke-width="1.1" stroke-linejoin="round" />
<line x1="370.6" y1="774.4" x2="370.6" y2="903" stroke="#111" stroke-width="0.9"/>
<line x1="358" y1="774.4" x2="358" y2="770" stroke="#111" stroke-width="0.9"/>
<polygon points="440,771.3 455.6,771.3 455.6,899.8 440,900.5" fill="#3558e2" stroke="#111" stroke-width="1" stroke-linejoin="round" />
<polygon points="440,800 455.6,800 455.6,812 440,832" fill="#2b43b0" stroke="none" stroke-width="0" stroke-linejoin="round" />
<rect x="336.3" y="787.3" width="123.1" height="10.2" fill="#a8a8a8" stroke="#111" stroke-width="1.1" />
<rect x="337" y="788" width="31" height="9" fill="#7e7e7e" stroke="none" stroke-width="1.0" />
<rect x="374.4" y="797.5" width="60.4" height="88.8" fill="#141414" stroke="none" stroke-width="1.0" />
<rect x="378.6" y="799.5" width="55.2" height="86.5" fill="#c8c8c8" stroke="none" stroke-width="1.0" />
<rect x="380.5" y="801" width="25.3" height="83" fill="#8f969e" stroke="#fff" stroke-width="0.8" />
<rect x="406.8" y="801" width="25.7" height="83" fill="#8f969e" stroke="#fff" stroke-width="0.8" />
<rect x="379" y="883.8" width="54.8" height="2.5" fill="#b0b0b0" stroke="#111" stroke-width="0.5" />
<rect x="461.3" y="795.4" width="105.2" height="87.7" fill="#111" stroke="none" stroke-width="1.0" />
<rect x="462.1" y="796.1999999999999" width="103.6" height="86.1" fill="#fff" stroke="none" stroke-width="1.0" />
<rect x="463.40000000000003" y="797.5" width="101.0" height="83.5" fill="#111" stroke="none" stroke-width="1.0" />
<rect x="465.3" y="799.1999999999999" width="97.2" height="80.7" fill="#bfc6d0" stroke="none" stroke-width="1.0" />
<rect x="465.3" y="803.6" width="97.2" height="2.4" fill="#fff" stroke="#111" stroke-width="0.8" />
<rect x="560.9" y="799.4" width="1.6" height="80.5" fill="#8f969e" stroke="none" stroke-width="1.0" />
<rect x="594.4" y="795.4" width="88.1" height="87.6" fill="#111" stroke="none" stroke-width="1.0" />
<rect x="595.1999999999999" y="796.1999999999999" width="86.5" height="86.0" fill="#fff" stroke="none" stroke-width="1.0" />
<rect x="596.5" y="797.5" width="83.9" height="83.4" fill="#111" stroke="none" stroke-width="1.0" />
<rect x="598.4" y="799.1999999999999" width="80.1" height="80.6" fill="#bfc6d0" stroke="none" stroke-width="1.0" />
<rect x="598.4" y="803.6" width="80.1" height="2.4" fill="#fff" stroke="#111" stroke-width="0.8" />
<rect x="676.9" y="799.4" width="1.6" height="80.4" fill="#8f969e" stroke="none" stroke-width="1.0" />
<rect x="828.3" y="795.3" width="88.6" height="75.3" fill="#111" stroke="none" stroke-width="1.0" />
<rect x="829.0999999999999" y="796.0999999999999" width="87.0" height="73.7" fill="#fff" stroke="none" stroke-width="1.0" />
<rect x="830.4" y="797.4" width="84.4" height="71.1" fill="#111" stroke="none" stroke-width="1.0" />
<rect x="832.3" y="799.0999999999999" width="80.6" height="68.3" fill="#bfc6d0" stroke="none" stroke-width="1.0" />
<rect x="911.3" y="799.3" width="1.6" height="68.1" fill="#8f969e" stroke="none" stroke-width="1.0" />
<rect x="974.4" y="795.3" width="76.6" height="75.3" fill="#111" stroke="none" stroke-width="1.0" />
<rect x="975.1999999999999" y="796.0999999999999" width="75.0" height="73.7" fill="#fff" stroke="none" stroke-width="1.0" />
<rect x="976.5" y="797.4" width="72.4" height="71.1" fill="#111" stroke="none" stroke-width="1.0" />
<rect x="978.4" y="799.0999999999999" width="68.6" height="68.3" fill="#bfc6d0" stroke="none" stroke-width="1.0" />
<rect x="1045.4" y="799.3" width="1.6" height="68.1" fill="#8f969e" stroke="none" stroke-width="1.0" />
<rect x="940.3" y="795.1" width="32.6" height="82.4" fill="#111" stroke="none" stroke-width="1.0" />
<rect x="941.2" y="796.5" width="1.1" height="80.0" fill="#fff" stroke="none" stroke-width="1.0" />
<rect x="970.9" y="796.5" width="1.1" height="80.0" fill="#fff" stroke="none" stroke-width="1.0" />
<rect x="944" y="798.8" width="25.3" height="6.9" fill="#8f969e" stroke="none" stroke-width="1.0" />
<rect x="943.8" y="807.5" width="25.4" height="69.5" fill="#fff" stroke="none" stroke-width="1.0" />
<rect x="957" y="807.5" width="12.2" height="69.5" fill="#c8c8c8" stroke="none" stroke-width="1.0" />
<rect x="945.8" y="809.8" width="21.4" height="62.5" fill="#111" stroke="none" stroke-width="1.0" />
<rect x="947" y="811" width="19" height="60" fill="#bfc6d0" stroke="none" stroke-width="1.0" />
<rect x="957.2" y="811" width="8.8" height="60" fill="#8f969e" stroke="none" stroke-width="1.0" />
<line x1="708.5" y1="771.3" x2="708.5" y2="890" stroke="#111" stroke-width="1"/>
<rect x="799.3" y="771.3" width="3.0" height="118.7" fill="#2b43b0" stroke="none" stroke-width="1.0" />
<line x1="802.3" y1="771.3" x2="802.3" y2="890" stroke="#111" stroke-width="1"/>
<path d="M712,882.5 V798.6 Q716,778 755,778 Q794,778 797.8,798.6 V882.5 Z" fill="#2b43b0" stroke="#111" stroke-width="1"/>
<path d="M727.6,795 V784 Q740,779.5 756,779.5 Q772,779.5 785.3,784 V795 Z" fill="#467a25" stroke="#111" stroke-width="0.9"/>
<rect x="727.6" y="795" width="57.7" height="12" fill="#2b43b0" stroke="#111" stroke-width="0.9" />
<rect x="712" y="796" width="8" height="86.5" fill="#c8c030" stroke="#111" stroke-width="0.7" />
<rect x="716" y="800" width="3" height="81" fill="#f0e040" stroke="none" stroke-width="1.0" />
<rect x="719" y="808" width="69.8" height="74.9" fill="#fff" stroke="#111" stroke-width="1.1" />
<rect x="788" y="808" width="3.8" height="75" fill="#111" stroke="none" stroke-width="1.0" />
<rect x="791.8" y="798" width="5.2" height="80" fill="#2b43b0" stroke="#111" stroke-width="0.6" />
<rect x="791" y="877.5" width="6" height="5.5" fill="#467a25" stroke="#111" stroke-width="0.6" />
<line x1="754.5" y1="809" x2="754.5" y2="882" stroke="#111" stroke-width="1"/>
<rect x="722.6" y="813.1" width="29.1" height="29.3" fill="#111" stroke="none" stroke-width="1.0" />
<rect x="723.6" y="814" width="8.37" height="6.6" fill="#bfc6d0" stroke="none" stroke-width="1.0" />
<rect x="732.9666666666667" y="814" width="8.37" height="6.6" fill="#bfc6d0" stroke="none" stroke-width="1.0" />
<rect x="742.3333333333334" y="814" width="8.37" height="6.6" fill="#bfc6d0" stroke="none" stroke-width="1.0" />
<rect x="723.6" y="821.6" width="8.37" height="6.4" fill="#bfc6d0" stroke="none" stroke-width="1.0" />
<rect x="732.9666666666667" y="821.6" width="8.37" height="6.4" fill="#bfc6d0" stroke="none" stroke-width="1.0" />
<rect x="742.3333333333334" y="821.6" width="8.37" height="6.4" fill="#bfc6d0" stroke="none" stroke-width="1.0" />
<rect x="723.6" y="829.5" width="8.37" height="6.0" fill="#bfc6d0" stroke="none" stroke-width="1.0" />
<rect x="732.9666666666667" y="829.5" width="8.37" height="6.0" fill="#bfc6d0" stroke="none" stroke-width="1.0" />
<rect x="742.3333333333334" y="829.5" width="8.37" height="6.0" fill="#bfc6d0" stroke="none" stroke-width="1.0" />
<rect x="723.6" y="836.5" width="8.37" height="5.0" fill="#bfc6d0" stroke="none" stroke-width="1.0" />
<rect x="732.9666666666667" y="836.5" width="8.37" height="5.0" fill="#bfc6d0" stroke="none" stroke-width="1.0" />
<rect x="742.3333333333334" y="836.5" width="8.37" height="5.0" fill="#bfc6d0" stroke="none" stroke-width="1.0" />
<rect x="757.2" y="813.1" width="28.6" height="29.3" fill="#111" stroke="none" stroke-width="1.0" />
<rect x="758.2" y="814" width="8.2" height="6.6" fill="#bfc6d0" stroke="none" stroke-width="1.0" />
<rect x="767.4" y="814" width="8.2" height="6.6" fill="#bfc6d0" stroke="none" stroke-width="1.0" />
<rect x="776.6" y="814" width="8.2" height="6.6" fill="#bfc6d0" stroke="none" stroke-width="1.0" />
<rect x="758.2" y="821.6" width="8.2" height="6.4" fill="#bfc6d0" stroke="none" stroke-width="1.0" />
<rect x="767.4" y="821.6" width="8.2" height="6.4" fill="#bfc6d0" stroke="none" stroke-width="1.0" />
<rect x="776.6" y="821.6" width="8.2" height="6.4" fill="#bfc6d0" stroke="none" stroke-width="1.0" />
<rect x="758.2" y="829.5" width="8.2" height="6.0" fill="#bfc6d0" stroke="none" stroke-width="1.0" />
<rect x="767.4" y="829.5" width="8.2" height="6.0" fill="#bfc6d0" stroke="none" stroke-width="1.0" />
<rect x="776.6" y="829.5" width="8.2" height="6.0" fill="#bfc6d0" stroke="none" stroke-width="1.0" />
<rect x="758.2" y="836.5" width="8.2" height="5.0" fill="#bfc6d0" stroke="none" stroke-width="1.0" />
<rect x="767.4" y="836.5" width="8.2" height="5.0" fill="#bfc6d0" stroke="none" stroke-width="1.0" />
<rect x="776.6" y="836.5" width="8.2" height="5.0" fill="#bfc6d0" stroke="none" stroke-width="1.0" />
<polygon points="239,907.3 355,901.9 355,903.6 239,909" fill="#8a5ae0" stroke="#111" stroke-width="0.8"/>
<polygon points="239,909 355,903.6 801.8,884.8 1098,874 1098,1069.8 239,1069.8" fill="#dcebd6" stroke="#2e5e12" stroke-width="1.6"/>
<circle cx="239" cy="909" r="3" fill="#000"/>
<circle cx="355" cy="903.6" r="3" fill="#000"/>
<circle cx="801.8" cy="884.8" r="3" fill="#000"/>
<circle cx="1098" cy="874" r="3" fill="#000"/>
<circle cx="1098" cy="1069.8" r="3" fill="#000"/>
<circle cx="239" cy="1069.8" r="3" fill="#000"/>
</svg>
<div id="tb"><div id="tbl"></div>
<svg class="i" style="left:0;top:0" width="1615" height="31" viewBox="0 0 1615 31">
<rect x="-6" y="0" width="28.5" height="26.5" rx="4.5" fill="#c7c7c9"/>
<rect x="25" y="0" width="27.5" height="26.5" rx="4.5" fill="#c7c7c9"/>
<rect x="55" y="0" width="12.5" height="26.5" rx="4.5" fill="#c7c7c9"/>
<rect x="126" y="0" width="27.5" height="26.5" rx="4.5" fill="#c7c7c9"/>
<rect x="156" y="0" width="12.5" height="26.5" rx="4.5" fill="#c7c7c9"/>
<rect x="441.25" y="0" width="27.25" height="26.5" rx="4.5" fill="#c7c7c9"/>
<rect x="471.25" y="0" width="27.5" height="26.5" rx="4.5" fill="#c7c7c9"/>
<g fill="none" stroke-width="1.3" stroke="#262626" stroke-linecap="butt">
<path d="M4.5,6 H16" stroke="#3d73f5" stroke-dasharray="2 1.6"/><path d="M3.5,5 V13" stroke="#3d73f5" stroke-dasharray="2 1.6"/><circle cx="3.5" cy="15.5" r="1.6" stroke="#3d73f5"/><path d="M5.3,15.5 H16"/>
<path d="M36.8,10 L40.8,13.8 L46.5,4.5" stroke-width="2" stroke-linejoin="round"/><path d="M31,16.5 H46 M38.2,14 V19"/>
<path d="M58.3,10.8 L61.5,13.9 L64.7,10.8" fill="none" stroke="#262626" stroke-width="1.5" stroke-linecap="round" stroke-linejoin="round"/>
<path d="M76,7 L89,19.5 M79,4.5 L92,17"/>
<path d="M103.3,10.8 L106.5,13.9 L109.7,10.8" fill="none" stroke="#262626" stroke-width="1.5" stroke-linecap="round" stroke-linejoin="round"/>
<line x1="119.5" y1="2.5" x2="119.5" y2="23.5" stroke="#cfcfcf" stroke-width="1"/>
<path d="M132,4 L137,7.3 L134.6,7.8 L136.4,10.2" stroke-width="1.6" stroke-linejoin="round"/><path d="M132,4 L134.6,7.8" stroke-width="1.6"/><rect x="132.2" y="11.5" width="12.2" height="8" rx="0.8"/><text x="138.3" y="18" font-size="6.5" font-weight="bold" text-anchor="middle" fill="#262626" stroke="none" font-family="Liberation Sans">XY</text><path d="M146,14.5 H149 M146,17.5 H149"/>
<path d="M158.8,10.8 L162,13.9 L165.2,10.8" fill="none" stroke="#262626" stroke-width="1.5" stroke-linecap="round" stroke-linejoin="round"/>
<path d="M176,8.5 H193 M176,15.5 H193 M181.5,3.5 V20.5 M188.5,3.5 V20.5" stroke-dasharray="2.2 1.3"/><g fill="#262626" stroke="none"><rect x="180.3" y="7.3" width="2.4" height="2.4"/><rect x="187.3" y="7.3" width="2.4" height="2.4"/><rect x="180.3" y="14.3" width="2.4" height="2.4"/><rect x="187.3" y="14.3" width="2.4" height="2.4"/></g>
<path d="M204.3,10.8 L207.5,13.9 L210.7,10.8" fill="none" stroke="#262626" stroke-width="1.5" stroke-linecap="round" stroke-linejoin="round"/>
<path d="M221.3,20.5 V3.5 H239 M226.9,20.5 V9 H239 M230,5.5 V9 M233.5,5.5 V9 M236.8,5.5 V9 M224,12.5 H226.9 M224,15.5 H226.9 M224,18.5 H226.9"/>
<path d="M255,20.5 H268 V7" stroke="#3d73f5" stroke-linecap="round"/><rect x="251.3" y="3.5" width="14.5" height="14" rx="1.2"/><path d="M254.5,14 V6.5 H262" stroke-width="1"/>
<path d="M279.3,10.8 L282.5,13.9 L285.7,10.8" fill="none" stroke="#262626" stroke-width="1.5" stroke-linecap="round" stroke-linejoin="round"/>
<g stroke="#a6a6a6"><circle cx="305" cy="6.8" r="3.2"/><path d="M302.5,9.5 L303.5,11 H306.5 L307.5,9.5"/><rect x="299.4" y="11" width="11.2" height="9.5" rx="1.2"/></g>
<path d="M324.3,10.8 L327.5,13.9 L330.7,10.8" fill="none" stroke="#262626" stroke-width="1.5" stroke-linecap="round" stroke-linejoin="round"/>
<path d="M341.3,18.5 V5.3 H358.8 M341.3,18.5 H358.8 M345,5.3 V8 M348,5.3 V8 M351,5.3 V8 M354,5.3 V8 M357,5.3 V8"/><text x="350" y="16.8" font-size="8" text-anchor="middle" fill="#262626" stroke="none" font-family="Liberation Sans" letter-spacing="1">12</text>
<path d="M372,4 V20.5 M387.5,4 V20.5 M375,4 V11 H384.5 V4 M372.5,17.5 H387 M372.5,17.5 L375.5,15.5 M372.5,17.5 L375.5,19.5 M387,17.5 L384,15.5 M387,17.5 L384,19.5"/>
<path d="M399.3,10.8 L402.5,13.9 L405.7,10.8" fill="none" stroke="#262626" stroke-width="1.5" stroke-linecap="round" stroke-linejoin="round"/>
<path d="M419.5,6 L431,18 M431,6 L419.5,18"/><rect x="421.5" y="9.5" width="7.5" height="6" fill="#ececec"/><rect x="421.5" y="9.5" width="7.5" height="6" rx="1"/>
<path d="M448,5 L461,10 M448,10 L461,14.5" stroke-width="1"/><rect x="446" y="3.5" width="3.8" height="3.5" fill="#c7c7c9"/><rect x="446" y="8.5" width="3.8" height="3.5" fill="#c7c7c9"/><rect x="459.2" y="8.2" width="3.8" height="3.5" fill="#c7c7c9"/><rect x="456.3" y="13.5" width="4.5" height="4.2" fill="#3d73f5" stroke="none"/><path d="M446,20.5 V16.5 H455 M449,20 L452,17 M452.5,20 L455.5,17" stroke-width="1.2"/><path d="M462,13 H464 M461.5,17 L463,18.5 M458.5,11.5 L459.5,10.2 M459,19 L460,20.5" stroke="#3d73f5" stroke-width="0.9"/>
<path d="M477,3.5 V20.5" stroke-width="1.9"/><path d="M482,3.5 V20.5 M482,9.5 H493.5 M482,13.5 H493.5"/>
<text x="515" y="10.8" font-size="8.5" fill="#262626" stroke="none" font-family="Liberation Sans">A1</text><path d="M514.5,7 Q510,7.5 507.5,10.8 M507.3,10.8 L507.8,8 M507.3,10.8 L510,10.4"/><rect x="506.3" y="14.5" width="15.2" height="6"/>
<g stroke="#a6a6a6"><path d="M543,3.5 H549.5 L546.2,7 Z M536,8.5 H553.5 M536.5,11.5 H553 M536,20.5 H553.5"/><path d="M538,11.5 L540,8.5 M541.5,11.5 L543.5,8.5 M545,11.5 L547,8.5 M548.5,11.5 L550.5,8.5" stroke-width="0.8"/><path d="M542,15 H550 L546,19 Z" fill="#a6a6a6"/></g>
<line x1="565.4" y1="2.5" x2="565.4" y2="23.5" stroke="#cfcfcf" stroke-width="1"/>
<path d="M579.5,20.5 V5.5 H594.5 M577,16.3 H582 M590.5,3 V8.5"/>
<path d="M609.3,16.5 Q610.5,6 620.3,5.3 M606.5,16.5 H612.5 M609.3,13.5 V20.5 M617,5.3 H625 M620.3,3 V8.5"/><path d="M609.3,16.5 L620.3,5.3" stroke="#999" stroke-width="0.6"/>
<path d="M637,4.5 H655" stroke="#3d73f5"/><path d="M646,6.5 V13 M643,9.3 L646,6.5 L649,9.3 M641,14.5 V20.5 M644.3,14.5 V20.5 M647.7,14.5 V20.5 M651,14.5 V20.5"/>
<path d="M669,8 Q667,11 670,13 L672,12 L675,15 L678,13 L675,10 L677,7 Q673,5 669,8 Z M674.5,11.5 L684,18.5" stroke-linejoin="round"/><path d="M676.5,13.5 L684,18.5" stroke-width="2"/>
<path d="M695.1999999999999,10.8 L698.4,13.9 L701.6,10.8" fill="none" stroke="#262626" stroke-width="1.5" stroke-linecap="round" stroke-linejoin="round"/>
<rect x="713.1" y="4.5" width="6.3" height="14" rx="0.8"/><rect x="721.9" y="4.5" width="7.5" height="5.8" rx="0.8"/><path d="M722.3,13 L727.5,15 L725.3,16 L727,18.5 L725.8,19 L724.2,16.7 L722.8,18.5 Z" fill="#262626" stroke="none"/>
<path d="M740.1999999999999,10.8 L743.4,13.9 L746.6,10.8" fill="none" stroke="#262626" stroke-width="1.5" stroke-linecap="round" stroke-linejoin="round"/>
<line x1="756.25" y1="2.5" x2="756.25" y2="23.5" stroke="#cfcfcf" stroke-width="1"/>
<path d="M768.5,8.5 V19.5 H780" stroke="#a6a6a6"/><rect x="774.5" y="5" width="9.5" height="8.8" stroke-width="1.2"/><g fill="#262626" stroke="none"><rect x="772.8" y="3.3" width="3.4" height="3.4"/><rect x="782.2" y="3.3" width="3.4" height="3.4"/><rect x="772.8" y="12.2" width="3.4" height="3.4"/><rect x="782.2" y="12.2" width="3.4" height="3.4"/></g>
<path d="M795.55,10.8 L798.75,13.9 L801.95,10.8" fill="none" stroke="#262626" stroke-width="1.5" stroke-linecap="round" stroke-linejoin="round"/>
<line x1="812.5" y1="2.5" x2="812.5" y2="23.5" stroke="#cfcfcf" stroke-width="1"/>
<path d="M826.5,4.5 H839 Q840.5,4.5 840.5,6 V6.5 Q840.5,8 839,8 H835.3 V15.5 H839 Q840.5,15.5 840.5,17 V18 Q840.5,19.5 839,19.5 H826.5 Q825,19.5 825,18 V17 Q825,15.5 826.5,15.5 H830.2 V8 H826.5 Q825,8 825,6.5 V6 Q825,4.5 826.5,4.5 Z" stroke-width="1.2"/>
<path d="M852.1999999999999,10.8 L855.4,13.9 L858.6,10.8" fill="none" stroke="#262626" stroke-width="1.5" stroke-linecap="round" stroke-linejoin="round"/>
<g stroke="#a6a6a6"><rect x="872.3" y="3.5" width="11.2" height="17" stroke="#cfcfcf" stroke-width="0.8"/><path d="M870,14.5 L878,6.5 L886,14.5 M873,11.5 V20.5 H883 V11.5"/></g>
<path d="M897.1999999999999,10.8 L900.4,13.9 L903.6,10.8" fill="none" stroke="#262626" stroke-width="1.5" stroke-linecap="round" stroke-linejoin="round"/>
<path d="M916.3,19.5 V5.5 H927 L923.5,8.7 L927,11.8 H916.3"/>
<path d="M946.3,19.5 V5.5 H956.5 L953,8.7 L956.5,11.8 H946.3"/><g stroke="#3d73f5" stroke-width="1.6"><path d="M953,12.8 H955 M956.5,12.8 H961 M953,15.8 H955 M956.5,15.8 H961 M953,18.8 H955 M956.5,18.8 H961"/></g>
<path d="M981,18.5 Q974,18 974.5,12 Q975,8 979,8 Q980,3 985,3.5 Q990,4 990,10"/><rect x="982" y="12" width="10" height="8.5" rx="1" stroke="#3d73f5" fill="#ececec"/><path d="M984.5,15.3 H989.5 M984.5,17.8 H989.5 M982,13.5 H992" stroke="#3d73f5" stroke-width="1"/>
<rect x="1004.2" y="3.3" width="17.8" height="17.2"/><path d="M1004.2,3.5 H1022" stroke-width="1.8"/><path d="M1013,8 V19.7 H1021 V14 Z M1015.5,19.5 V15.8 H1018 V19.5" stroke-width="1.1"/><path d="M1005,18 L1012,11" stroke="#999" stroke-width="0.8"/>
<path d="M1032.2,10.8 L1035.4,13.9 L1038.6000000000001,10.8" fill="none" stroke="#262626" stroke-width="1.5" stroke-linecap="round" stroke-linejoin="round"/>
<path d="M1050,15 V8 L1054,3.5 L1058,6 M1053,17.5 V10 L1057.5,6.5 L1063.5,9.5 V12 M1056.5,19.5 V13.5 H1065 V19.5 M1059,19 V16 H1061.5 V19 M1063,19 V16"/>
<path d="M1077.05,10.8 L1080.25,13.9 L1083.45,10.8" fill="none" stroke="#262626" stroke-width="1.5" stroke-linecap="round" stroke-linejoin="round"/>
<path d="M1094,15.5 V8.5 L1100,3.5 L1111,8.5 M1094,15.5 H1103.5 M1100,3.5 L1105,10 V14"/><path d="M1104.5,17.5 L1106.7,19.8 L1111.5,13.5" stroke="#3d73f5" stroke-width="1.9" stroke-linejoin="round"/>
<line x1="1123.35" y1="2.5" x2="1123.35" y2="23.5" stroke="#cfcfcf" stroke-width="1"/>
<path d="M1138,19.5 L1149,8.5" stroke="#262626" stroke-width="3.8" stroke-linecap="round"/><path d="M1138,19.5 L1149,8.5" stroke="#ececec" stroke-width="1.8" stroke-linecap="round"/><path d="M1138.2,19.3 L1143,14.5" stroke="#3d73f5" stroke-width="3.6" stroke-linecap="round"/><path d="M1147,6 L1151.5,10.5 M1149,7.5 L1152,4.5"/>
<path d="M1168,17.5 L1177,8.5" stroke="#262626" stroke-width="3.8" stroke-linecap="round"/><path d="M1168,17.5 L1177,8.5" stroke="#ececec" stroke-width="1.8" stroke-linecap="round"/><path d="M1168.2,17.3 L1172,13.5" stroke="#3d73f5" stroke-width="3.6" stroke-linecap="round"/><path d="M1165.5,20.5 L1168,18 M1175,5.5 L1180.5,11 M1178,7.5 L1182.5,3.5 M1180,5 L1182,7"/>
<g stroke="#b8c8f0" stroke-width="1"><path d="M1195,4 L1206,3 L1207,12 M1196,12 L1195,4 M1195.5,8 H1206.5 M1200.5,3.5 V16"/></g><g stroke="#a6a6a6"><path d="M1202,19 L1210,11" stroke-width="3.5" stroke-linecap="round"/><path d="M1202,19 L1210,11" stroke="#ececec" stroke-width="1.6" stroke-linecap="round"/></g>
<path d="M1223.0,10.8 L1226.2,13.9 L1229.4,10.8" fill="none" stroke="#262626" stroke-width="1.5" stroke-linecap="round" stroke-linejoin="round"/>
</g>
</svg>
</div>
<div id="ib">
<div class="sep" style="left:47px;top:3px;height:57px"></div>
<div class="sep" style="left:232px;top:3px;height:57px"></div>
<div class="sep" style="left:417px;top:3px;height:57px"></div>
<div class="sep" style="left:602px;top:3px;height:57px"></div>
<div class="sep" style="left:787px;top:3px;height:57px"></div>
<div class="sep" style="left:972px;top:3px;height:57px"></div>
<div class="sep" style="left:1157px;top:3px;height:57px"></div>
<div class="sep" style="left:1342px;top:3px;height:57px"></div>
<div class="sep" style="left:1527px;top:3px;height:57px"></div>
<div class="lbl" style="left:52px;top:4px">Geometry Method:</div>
<div class="lbl" style="left:237px;top:4px">Fill Category:</div>
<div class="lbl" style="left:422px;top:4px">Fill Type:</div>
<div class="lbl" style="left:607px;top:4px">Fill Pen:</div>
<div class="lbl" style="left:792px;top:4px">Outline Type:</div>
<div class="lbl" style="left:977px;top:4px">Contour Pen:</div>
<div class="lbl" style="left:1162px;top:4px">Construction Method:</div>
<div class="lbl" style="left:1347px;top:4px">Show Area Text:</div>
<div class="lbl" style="left:1532px;top:4px">Relation To Zones:</div>
<div class="box" style="left:-10px;top:25px;width:52px;height:28px"><div class="txt" style="left:10px;top:7px;font-size:12px">e/vis...</div></div>
<div class="btn" style="left:53px;top:25px;width:42px;height:28px"></div>
<div class="box" style="left:237px;top:25px;width:177px;height:28px"><div class="txt" style="left:35px;top:7px">Drafting Fill</div></div>
<div class="box" style="left:423px;top:25px;width:176px;height:28px"><div style="position:absolute;left:8px;top:3px;width:22px;height:20px;border:1.5px solid #111;background:#fff"></div><div class="txt" style="left:35px;top:7px">75 %</div></div>
<div class="inp" style="left:695px;top:21px;width:43px;height:16px"><div class="txt" style="left:3px;top:1px">101</div></div>
<div class="inp" style="left:695px;top:41px;width:43px;height:17px"><div class="txt" style="left:3px;top:2px">91</div></div>
<div class="box" style="left:745px;top:20px;width:32px;height:17px;border-radius:4px"></div>
<div class="box" style="left:745px;top:41px;width:32px;height:17px;border-radius:4px"></div>
<div class="btn" style="left:793px;top:25px;width:42px;height:28px"></div>
<div class="box" style="left:837px;top:25px;width:130px;height:28px"><div class="txt" style="left:8px;top:1px">Solid Line</div><div style="position:absolute;left:9px;top:19px;width:110px;height:1px;background:#222"></div></div>
<div class="inp" style="left:1066px;top:31px;width:42px;height:16px"><div class="txt" style="left:3px;top:1px">245</div></div>
<div class="box" style="left:1115px;top:30px;width:32px;height:17px;border-radius:4px"><div style="position:absolute;left:7px;top:4px;width:2.5px;height:9px;background:#111"></div><div style="position:absolute;left:16px;top:4px;width:12px;height:9px;background:#111"></div></div>
<div class="btn" style="left:1163px;top:25px;width:42px;height:28px;background:#d2d2d2"></div>
<div style="position:absolute;left:1347px;top:32px;width:11px;height:11px;background:#fff;border-radius:2.5px;box-shadow:0 0 0 0.5px #b8b8b8"></div>
<div class="txt" style="left:1363px;top:31px">Show Area Text</div>
<div style="position:absolute;left:1532px;top:22px;width:11px;height:11px;background:#fff;border-radius:2.5px;box-shadow:0 0 0 0.5px #b8b8b8"></div>
<div class="txt" style="left:1548px;top:21px">Subtract from</div>
<div class="inp" style="left:1532px;top:42px;width:43px;height:16px;background:#f0f0f0;box-shadow:0 0 0 0.5px #d8d8d8"><div class="txt" style="left:4px;top:1px;color:#aaa;font-size:11px">0</div></div>
<div class="txt" style="left:1578px;top:42px;color:#777">% of Fill</div>
<svg class="i" style="left:0;top:0" width="1615" height="61" viewBox="0 31 1615 61">
<g fill="none" stroke="#262626" stroke-width="1.1">
<defs><pattern id="h1" patternUnits="userSpaceOnUse" width="3.3" height="3.3" patternTransform="rotate(45)"><line x1="0" y1="0" x2="0" y2="3.3" stroke="#262626" stroke-width="1.25"/></pattern></defs>
<path d="M35.9,66.3 L39.1,69.5 L35.9,72.7" fill="none" stroke="#262626" stroke-width="1.5" stroke-linecap="round" stroke-linejoin="round"/>
<path d="M65,76.5 V67 L68,64 H80 L73,70.5 L83,76.5 Z" fill="url(#h1)" stroke-width="1.3" stroke-linejoin="round"/>
<rect x="109.3" y="64.3" width="16.5" height="12.2" fill="url(#h1)" stroke-width="1.3"/>
<path d="M150.5,68.5 L165,61 L169.5,70.5 L155,78 Z" fill="url(#h1)" stroke-width="1.3"/><path d="M170.5,69.5 L173,68" stroke-width="1"/>
<path d="M246,76.5 V67 L249,64 H261 L254,70.5 L263,76.5 Z" fill="url(#h1)" stroke-width="1.3" stroke-linejoin="round"/>
<path d="M405.9,66.8 L409.1,70 L405.9,73.2" fill="none" stroke="#262626" stroke-width="1.5" stroke-linecap="round" stroke-linejoin="round"/>
<path d="M590.9,66.8 L594.1,70 L590.9,73.2" fill="none" stroke="#262626" stroke-width="1.5" stroke-linecap="round" stroke-linejoin="round"/>
<path d="M660,62 L666,56 M663,64.5 L670,57.5 M666,67 L673,60 M671,67 L672,66" stroke-width="1.3"/>
<path d="M680.5,53 V63.5 L682.5,66.5 L684.5,63.5 V53 M676,66.8 H683" stroke-width="1.1"/>
<path d="M660,87 V80 L663.5,76 H673 L668,81.5 L675,87 Z" fill="#8a8f95" stroke="none"/>
<path d="M680.5,73.5 V84 L682.5,87 L684.5,84 V73.5 M676,87.2 H683" stroke-width="1.1"/>
<path d="M816,77 H808 M809,65.5 H822 L816,70 L820,74" stroke-width="1.2"/><path d="M815.5,73 L818.5,77.5 L824,67.5" stroke-width="1.9" stroke-linejoin="round"/>
<path d="M958.4,66.8 L961.6,70 L958.4,73.2" fill="none" stroke="#262626" stroke-width="1.5" stroke-linecap="round" stroke-linejoin="round"/>
<path d="M1030,76.5 V70 Q1031,64 1036,64 H1039 L1036,69 L1044.5,76.5 Z" stroke-width="1.2" stroke-linejoin="round"/>
<path d="M1050.5,63.5 V73 L1052.5,76 L1054.5,73 V63.5 M1046,76.5 H1053" stroke-width="1.1"/>
<path d="M1175,62.5 H1192 M1175,64.9 H1192 M1175,67.3 H1192 M1175,69.7 H1192 M1175,72.1 H1192 M1175,74.5 H1192 M1175,76.9 H1192" stroke="#555" stroke-width="0.8"/>
<defs><pattern id="hd" patternUnits="userSpaceOnUse" width="3.4" height="3.4" patternTransform="rotate(45)"><line x1="0" y1="0" x2="0" y2="3.4" stroke="#7d8187" stroke-width="1.3"/></pattern><pattern id="hx" patternUnits="userSpaceOnUse" width="3.4" height="3.4" patternTransform="rotate(45)"><path d="M0,0 V3.4 M0,1.7 H3.4" stroke="#7d8187" stroke-width="1.1"/></pattern></defs>
<rect x="1219" y="62" width="17" height="16" fill="url(#hd)" stroke="none"/><path d="M1223,73 L1232.5,63.5 M1229,64 H1232.5 V67.5" stroke="#7d8187" stroke-width="1.3" fill="none"/><circle cx="1224" cy="72.5" r="1.5" fill="#ebebeb" stroke="#7d8187" stroke-width="0.9"/>
<rect x="1263" y="62" width="17" height="16" fill="url(#hx)" stroke="none"/><path d="M1266.5,73 L1276,63.5 M1272.5,64 H1276 V67.5 M1266,66 V70 H1270" stroke="#7d8187" stroke-width="1.3" fill="none"/>
<circle cx="1316.5" cy="70.5" r="8" fill="url(#hx)" stroke="none"/><path d="M1307.5,62 L1316,70.5 M1307.5,62 H1311.5 M1307.5,62 V66" stroke="#7d8187" stroke-width="1.3" fill="none"/>
</g>
</svg>
</div>
<div id="tabs">
<div class="a" style="left:54px;top:0;width:300px;height:23px;background:#fff"></div>
<div class="tsep" style="left:653px"></div>
<div class="tsep" style="left:953px"></div>
<div class="tsep" style="left:1253px"></div>
<div class="tsep" style="left:1553px"></div>
<div class="tab" style="left:187px">[1 Fasade]</div>
<div class="tab" style="left:491px">[Fasade]</div>
<div class="tab" style="left:767px">(!) 2. etg [3D / All]</div>
<div class="tab" style="left:1075px">[Action Center]</div>
<div class="tab" style="left:1393px">[Snitt E]</div>
<svg class="i" style="left:0;top:0" width="1615" height="23" viewBox="0 92 1615 23">
<g fill="none" stroke="#333" stroke-width="1.1" stroke-linejoin="round">
<path d="M166.5,110.5 V101.5 L174.75,97.5 L183,101.5 V110.5 Z"/>
<path d="M470.5,110.5 V101.5 L479.0,97.5 L487.5,101.5 V110.5 Z"/>
<path d="M747.5,99.5 L757,98 L763,99.5 V110 L757,112 L747.5,110.5 Z M757,98 V112" stroke="#3d73f5"/>
<path d="M1056,111.5 L1058,100 H1063 L1065,111.5 Z M1058.5,100 L1060.5,96.5 L1062.5,100 M1057.5,104 H1063.5 M1060.5,104 V111.5" stroke-width="1"/><circle cx="1068.3" cy="97.5" r="2" fill="#e8532a" stroke="none"/>
<path d="M1372.5,110.5 V101 L1380.5,97.5 L1388.5,101 V110.5 Z M1372.5,101.5 H1388.5" />
</g>
</svg>
</div>
<div class="a" style="left:834px;top:116px;width:32px;height:16px;background:#f2f2f2;border-radius:0 0 4px 4px"></div>
<svg class="i" style="left:834px;top:116px" width="32" height="16"><path d="M3 8.5h5M10 8.5h5M17 8.5h5M24 8.5h5" stroke="#e9a650" stroke-width="1.5"/></svg>
<div class="a" style="left:834px;top:1246px;width:32px;height:17px;background:#f2f2f2;border-radius:4px 4px 0 0"></div>
<svg class="i" style="left:834px;top:1246px" width="32" height="17"><path d="M3 7h5M10 7h5M17 7h5M24 7h5" stroke="#e9a650" stroke-width="1.5"/></svg>
<div id="bb">
<div class="bsep" style="left:190px"></div>
<div class="bsep" style="left:389px"></div>
<div class="bsep" style="left:588px"></div>
<div class="bsep" style="left:787px"></div>
<div class="bsep" style="left:986px"></div>
<div class="bsep" style="left:1185px"></div>
<div class="bsep" style="left:1384px"></div>
<div class="bsep" style="left:1583px"></div>
<div class="btxt" style="left:89px;color:#a0a0a0">N/A</div>
<div class="btxt" style="left:282px">1:100</div>
<div class="btxt" style="left:476px">Custom</div>
<div class="btxt" style="left:662px">Entire Model</div>
<div class="btxt" style="left:855px">01 Penner 1:50</div>
<div class="btxt" style="left:1038px">01 Skisse/forprosjekt</div>
<div class="btxt" style="left:1257px">No Overrides</div>
<div class="btxt" style="left:1463px">01 Nybygg</div>
<svg class="i" style="left:0;top:0" width="1615" height="19" viewBox="0 1263 1615 19">
<g fill="none" stroke="#262626" stroke-width="1.1" stroke-linejoin="round">
<path d="M0.5,1271.5 L4.5,1267.5 L9,1272 L5,1276 Z M7.5,1278 Q10.5,1277 10.5,1273.5 M9,1275 L10.5,1273.3 L12,1275" stroke="#a8a8a8"/>
<path d="M179.1,1269.3 L182.1,1272.3 L179.1,1275.3" fill="none" stroke="#a8a8a8" stroke-width="1.4" stroke-linecap="round" stroke-linejoin="round"/>
<rect x="197.5" y="1268.8" width="14.5" height="6.5"/><path d="M200.5,1268.8 V1271.5 M203.5,1268.8 V1271.5 M206.5,1268.8 V1271.5 M209.5,1268.8 V1271.5"/>
<path d="M378.0,1269.3 L381.0,1272.3 L378.0,1275.3" fill="none" stroke="#262626" stroke-width="1.4" stroke-linecap="round" stroke-linejoin="round"/>
<path d="M397,1268.5 L400,1266.5 H411 L408,1268.5 Z M397,1268.5 V1270 M397,1271.5 L400,1269.5 H411 L408,1271.5 H397 M397,1274.5 L400,1272.5 H411 L408,1274.5 H397 M397,1277.5 L400,1275.5 H411 L408,1277.5 H397" stroke-width="1"/>
<path d="M576.5,1269.3 L579.5,1272.3 L576.5,1275.3" fill="none" stroke="#262626" stroke-width="1.4" stroke-linecap="round" stroke-linejoin="round"/>
<rect x="596.5" y="1267.2" width="12.5" height="10.3"/><path d="M596.5,1270.5 H609 M598,1274 L601,1270.5 M601.5,1274 L604.5,1270.5 M605,1274 L608,1270.5" stroke-width="1"/>
<path d="M775.5,1269.3 L778.5,1272.3 L775.5,1275.3" fill="none" stroke="#262626" stroke-width="1.4" stroke-linecap="round" stroke-linejoin="round"/>
<path d="M799,1266 V1274.5 L801.5,1278.5 L804,1274.5 V1266 M799,1274.5 H804"/>
<path d="M974.5,1269.3 L977.5,1272.3 L974.5,1275.3" fill="none" stroke="#262626" stroke-width="1.4" stroke-linecap="round" stroke-linejoin="round"/>
<rect x="993" y="1267.2" width="14.5" height="10.3" stroke-width="1.2"/><rect x="995.8" y="1269.8" width="9" height="5"/>
<path d="M1173.5,1269.3 L1176.5,1272.3 L1173.5,1275.3" fill="none" stroke="#262626" stroke-width="1.4" stroke-linecap="round" stroke-linejoin="round"/>
<path d="M1195,1276 H1192.5 V1268.5 H1197 M1199,1267 Q1202,1264.5 1204,1267.5 M1202.5,1265.5 L1204.2,1267.8 L1201.8,1268.3" stroke-width="1"/><rect x="1198.5" y="1270" width="6.5" height="6.5" fill="#777" stroke="#333" stroke-width="0.8"/>
<path d="M1373.5,1269.3 L1376.5,1272.3 L1373.5,1275.3" fill="none" stroke="#262626" stroke-width="1.4" stroke-linecap="round" stroke-linejoin="round"/>
<path d="M1392,1277.5 L1399,1266.5 L1405,1271.5 V1277.5 Z M1392,1277.5 H1405" stroke-width="1"/><path d="M1398.5,1266.5 V1277.5 M1400.8,1277.5 V1273 H1403.2 V1277.5" stroke-width="1"/>
<path d="M1571.5,1269.3 L1574.5,1272.3 L1571.5,1275.3" fill="none" stroke="#262626" stroke-width="1.4" stroke-linecap="round" stroke-linejoin="round"/>
<path d="M1590.5,1275 V1269 L1594,1265.5 L1597.5,1268 M1593,1277 V1271 L1597,1268 L1602,1270.5 M1596,1278 V1273.5 H1604.5 V1278 M1598.5,1277.5 V1275.5 H1601 V1277.5" stroke-width="1"/>
</g>
</svg>
</div>
<div id="bt"><div id="btl"></div>
<svg class="i" style="left:0;top:0" width="1615" height="14" viewBox="0 1282 1615 14">
<g fill="none" stroke="#262626" stroke-width="1.1">
<path d="M45,1292 H61"/><line x1="73" y1="1289" x2="73" y2="1296" stroke="#ccc"/>
<path d="M84.5,1296 V1290 H103 V1296" stroke-width="1.3"/><path d="M84.5,1290.5 H103" stroke-width="2.2"/><path d="M88,1296 V1293 H100 V1296"/>
<path d="M124.5,1296 V1289.5 M122,1292 L124.5,1289.5 L127,1292"/>
<path d="M146,1296 L152,1289.5 L159,1296"/>
<path d="M177,1296 L184,1291 L190,1289 L192,1296" stroke="#3d73f5"/><path d="M176,1296 L183,1292"/>
<line x1="219" y1="1289" x2="219" y2="1296" stroke="#ccc"/>
<path d="M230,1296 L233,1292 L243,1290.5 L245,1293 V1296 M265,1296 V1292 L275,1290 L280,1291 V1296 M302,1296 L308,1291 L316,1289.5 V1296"/>
<line x1="298" y1="1289" x2="298" y2="1296" stroke="#ccc"/>
<rect x="353" y="1286" width="27" height="14" rx="4" fill="#c7c7c9" stroke="none"/><path d="M360,1296 L366.5,1291 L373,1296" stroke="#999"/>
<circle cx="396.5" cy="1291" r="1.8" stroke="#a8a8a8"/><line x1="408" y1="1289" x2="408" y2="1296" stroke="#ccc"/>
<path d="M431,1296 V1292 Q437,1289 443,1292 M436,1289.5 V1296 M464,1296 V1290 H478 V1296 M468,1296 L471,1292 L474,1296 M525,1296 V1291 H534 V1296" stroke="#a8a8a8"/><path d="M495,1293 Q499,1289 502,1293 M504,1293 Q507,1289 510,1293" stroke="#8fb0f5"/>
<line x1="548" y1="1289" x2="548" y2="1296" stroke="#ccc"/><path d="M563,1296 V1292 H567 L569,1289.5 H574 L576,1292 H580 V1296" stroke-width="1.3"/><line x1="602" y1="1289" x2="602" y2="1296" stroke="#ccc"/>
<path d="M621,1296 L626,1289 L631,1296 M633,1296 V1291 H641 M650,1296 V1291 M655,1296 V1289 H660" stroke="#a8a8a8"/>
<path d="M656,1296 V1288.5 M684,1296 L686,1291 H699 V1296 M688,1296 L691,1292 M694,1296 L697,1292 M712,1290.5 H727" /><path d="M712,1290.5 H727" stroke="#3d73f5" stroke-width="1.3"/><path d="M712,1293 H727 M742,1296 L745,1291 H756 L753,1296 M774,1293 L777,1290 L780,1293 L783,1290 M803,1296 V1289 M808,1296 V1289"/>
<path d="M819,1296 V1291.5 H836 V1296 M824,1291.5 V1296 M830,1291.5 V1296 M856,1296 V1289 M861,1296 V1289 M864,1292 L867,1289 L870,1292 L873,1289"/>
<line x1="885" y1="1289" x2="885" y2="1296" stroke="#ccc"/>
<path d="M898,1296 V1290 H913 V1296 M903,1293 L906,1290 M935,1296 V1291 H951 V1296 M941,1291 V1296 M946,1291 V1296" stroke="#a8a8a8"/>
<path d="M992,1296 V1290 H1006 V1296 M993,1291 L1005,1296 M998,1291 L1006,1295" stroke-width="1"/><path d="M1023,1296 V1290 M1023,1290 L1030,1296 M1033,1294 Q1035,1296 1037,1294"/>
<path d="M1026,1294 Q1030,1297 1035,1294" stroke="#3d73f5"/><path d="M1048,1296 V1290.5 H1063 V1296" /><path d="M1052,1296 L1055.5,1292 L1059,1296 Z" fill="#3d73f5" stroke="#3d73f5"/>
<path d="M1088,1296 V1290 L1096,1296 V1290 M1100,1293 V1296 M1097,1293 L1100,1296" stroke="#99aacc"/><line x1="1113" y1="1289" x2="1113" y2="1296" stroke="#ccc"/><path d="M1125,1294 L1127,1291 M1131,1290 V1292 M1134,1291 L1136,1293" stroke="#a8a8a8"/>
</g>
</svg>
</div>

<svg id="ov" width="1615" height="1296" viewBox="0 0 1615 1296">
<g fill="none" stroke="#dc4519" stroke-linecap="round" stroke-linejoin="round">
<ellipse cx="764.4" cy="69.6" rx="41.3" ry="41.5" stroke-width="3.9"/>
<path stroke-width="4.2" d="M782.7,855.7 C775.8,856.7 753.0,860.0 741.3,861.4 C729.6,862.8 727.9,863.6 712.7,864.0 C697.5,864.4 671.5,863.8 650,863.8 C628.5,863.8 605.7,863.5 584,863.7 C562.3,863.9 539.0,864.6 520,865 C501.0,865.4 484.5,866.2 470,866.3 C455.5,866.4 445.1,867.5 432.8,865.5 C420.5,863.5 408.7,857.2 396,854 C383.3,850.8 369.8,847.5 356.7,846 C343.6,844.5 330.5,844.5 317.4,845 C304.3,845.5 291.1,846.1 278,848.9 C264.9,851.7 249.6,857.0 238.7,862 C227.8,867.0 221.3,872.9 212.5,879 C203.7,885.1 191.7,891.9 186,898.7 C180.3,905.5 179.8,911.2 178.4,919.7 C177.0,928.2 177.8,940.5 177.8,950 C177.8,959.5 177.4,963.7 178.4,977 C179.4,990.3 182.8,1012.6 183.6,1029.8 C184.4,1047.0 183.4,1065.8 183,1080 C182.6,1094.2 181.0,1107.5 181,1115 C181.0,1122.5 181.7,1122.6 183,1125 C184.3,1127.4 181.8,1127.0 188.9,1129.5 C196.0,1132.0 212.9,1136.8 225.6,1140 C238.3,1143.2 245.3,1146.7 265,1149 C284.7,1151.3 317.4,1153.5 343.6,1154 C369.8,1154.5 401.2,1152.4 422.3,1151.8 C443.4,1151.2 447.8,1152.4 470,1150.2 C492.2,1148.0 517.6,1141.8 555.7,1138.4 C593.8,1135.0 658.0,1131.3 698.4,1129.8 C738.8,1128.3 774.6,1128.2 798.4,1129.2 C822.2,1130.2 827.6,1133.9 841.2,1135.5 C854.8,1137.1 866.4,1137.4 880,1138.8 C893.6,1140.2 908.5,1142.9 922.8,1144 C937.1,1145.1 949.0,1146.9 965.6,1145.2 C982.2,1143.5 1003.6,1137.8 1022.7,1134 C1041.8,1130.2 1058.6,1126.4 1080,1122.6 C1101.4,1118.8 1135.3,1115.0 1151,1111 C1166.7,1107.0 1168.3,1104.2 1174,1098.3 C1179.7,1092.4 1183.0,1088.8 1185.4,1075.5 C1187.8,1062.2 1188.3,1037.5 1188.3,1018.4 C1188.3,999.3 1187.8,980.1 1185.4,961 C1183.0,941.9 1177.8,922.0 1174,904 C1170.2,886.0 1168.8,865.1 1162.6,852.8 C1156.4,840.5 1146.0,835.7 1137,830 C1128.0,824.3 1117.9,821.3 1108.4,818.5 C1098.9,815.7 1099.1,814.1 1080,813.4 C1060.9,812.7 1022.6,813.7 994,814.3 C965.4,814.9 927.5,816.0 908.5,817 C889.5,818.0 893.6,818.8 880,820.3 C866.4,821.8 840.6,823.1 827,825.7 C813.4,828.3 806.0,832.6 798.4,835.7 C790.8,838.8 784.1,842.9 781.3,844.3"/>
<path stroke-width="3" d="M1023,1280.7 C1027.5,1280.5 1039.2,1279.8 1050,1279.3 C1060.8,1278.8 1074.7,1278.3 1088,1278 C1101.3,1277.7 1115.2,1277.7 1130,1277.5 C1144.8,1277.3 1168.8,1277.1 1176.5,1277"/>
<path stroke-width="3" d="M1218,1280.2 C1220.3,1279.5 1227.0,1277.2 1232,1276.3 C1237.0,1275.4 1243.0,1274.8 1248,1274.6 C1253.0,1274.4 1257.3,1274.7 1262,1275.2 C1266.7,1275.7 1270.5,1276.6 1276,1277.8 C1281.5,1279.0 1289.0,1281.3 1295,1282.6 C1301.0,1283.9 1303.2,1284.9 1312,1285.6 C1320.8,1286.3 1336.7,1286.5 1348,1286.7 C1359.3,1286.9 1368.7,1286.6 1380,1286.5 C1391.3,1286.4 1409.8,1286.2 1415.7,1286.1"/>
</g>
</svg>
</div>
</body></html>
